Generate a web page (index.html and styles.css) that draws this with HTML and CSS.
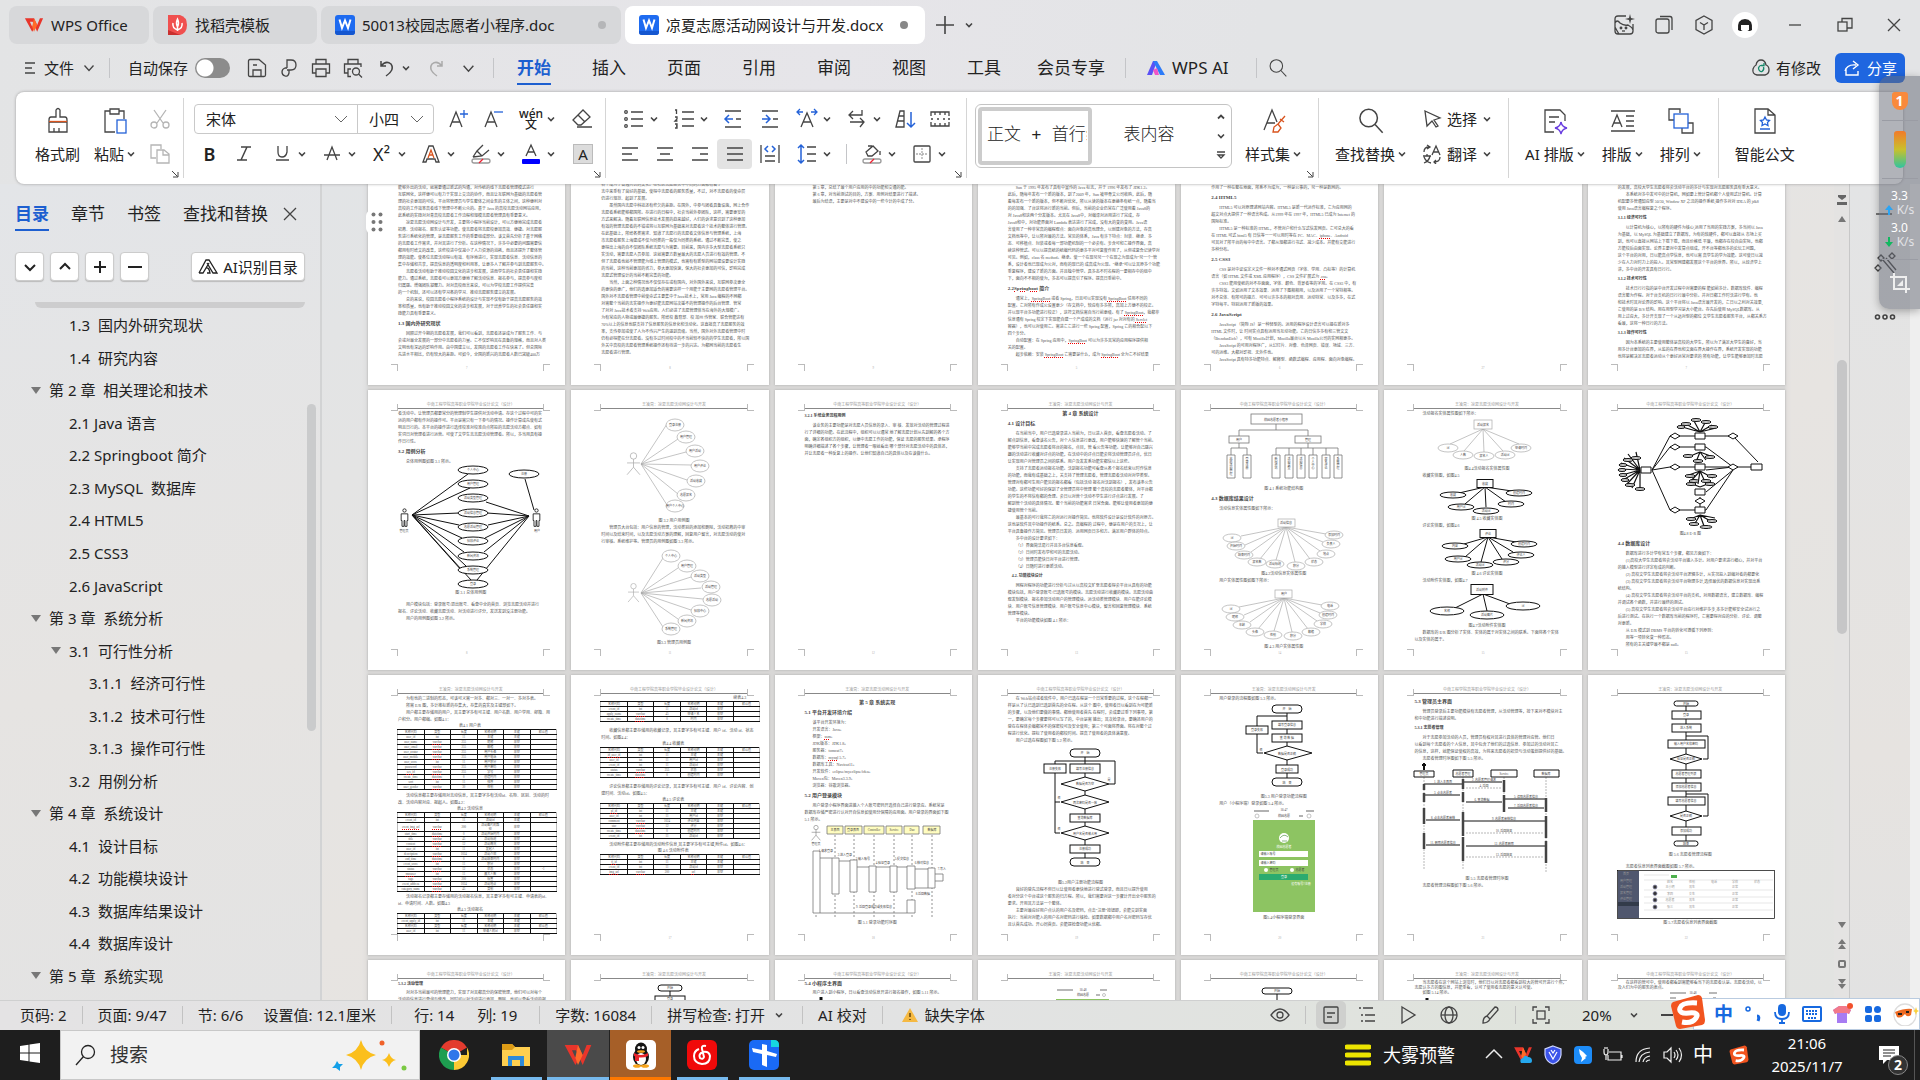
FILE: index.html
```html
<!DOCTYPE html>
<html lang="zh-CN">
<head>
<meta charset="utf-8">
<title>凉夏志愿活动网设计与开发.docx - WPS Office</title>
<link rel="stylesheet" href="styles.css">
</head>
<body>
<svg class="defs" aria-hidden="true">
  <symbol id="chev" viewBox="0 0 10 10"><path d="M2 3.5 5 6.5 8 3.5" stroke-width="1.6"/></symbol>
  <symbol id="chevw" viewBox="0 0 12 12"><path d="M1.5 3.5 6 8.500 10.500 3.500"/></symbol>
  <symbol id="corner" viewBox="0 0 8 8"><path d="M1 1 6.500 6.500M7 2V7H2"/></symbol>
  <symbol id="word" viewBox="0 0 20 20"><rect width="20" height="20" rx="3" fill="#1e6bf0" stroke="none"/><path d="M4.500 4.500 7 13 10 5.500 13 13 15.500 4.500" stroke="#fff" stroke-width="2"/><path d="M0 16h20v1a3 3 0 0 1-3 3H3a3 3 0 0 1-3-3z" fill="#1557d0" stroke="none"/></symbol>
  <symbol id="wps" viewBox="0 0 22 18"><path d="M1 1.500H11L14.500 9 17.500 1.500H21L14.500 16.500 9.500 5.500H6.500L9 11 11 7.500 12.500 11 9 16.500z" fill="#e8352b" stroke="none"/><path d="M11 1.500 14.500 9 11 16.500 9 11z" fill="#ff6a2a" stroke="none"/></symbol>
  <symbol id="glass" viewBox="0 0 24 24"><circle cx="10" cy="9.500" r="7.500"/><path d="M15.500 15 22 22"/></symbol>
  <symbol id="sogou" viewBox="0 0 36 36"><path d="M3 8 28 1q3 0 4 3l3 22q0 4-3 5L10 35q-3 0-4-3L1 12q0-3 2-4z" fill="#f2541f" stroke="none"/><path d="M27 9Q12 8 10 14t9 5 7 5-14 4" stroke="#fff" stroke-width="5"/></symbol>
  <symbol id="man" viewBox="0 0 10 24"><g stroke-width="1"><circle cx="5" cy="3" r="2"/><path d="M1 7H9V15H8V22H5.500V15H4.500V22H2V15H1z"/></g></symbol>
  <symbol id="stick" viewBox="0 0 14 22"><circle cx="7" cy="3.500" r="3"/><path d="M7 6.500V14M1 10H13M7 14 1 21M7 14 13 21"/></symbol>
</svg>

<header class="titlebar">
  <nav class="doctabs">
    <a href="#" class="dtab home"><svg width="20" height="18"><use href="#wps"/></svg>WPS Office</a>
    <a href="#" class="dtab tpl"><svg width="19" height="20" viewBox="0 0 19 20"><path d="M0 0H12Q19 2 19 10T12 20H0z" fill="#f0504f" stroke="none"/><path d="M0 15 12 20H0z" fill="#c9302f" stroke="none"/><path d="M9.500 16V9M9.500 15Q4 13 5 8M9.500 15Q15 13 14 8M9.500 12Q7.500 8 9.500 4 11.500 8 9.500 12" stroke="#fff" stroke-width="1.500"/></svg>找稻壳模板</a>
    <a href="#" class="dtab file"><svg width="20" height="20"><use href="#word"/></svg><span>50013校园志愿者小程序.doc</span><i class="dot pale"></i></a>
    <a href="#" class="dtab file active"><svg width="20" height="20"><use href="#word"/></svg><span>凉夏志愿活动网设计与开发.docx</span><i class="dot"></i></a>
  </nav>
  <button class="bare" aria-label="新建"><svg width="20" height="20" viewBox="0 0 20 20"><path d="M10 1V19M1 10H19" stroke-width="1.600"/></svg></button>
  <button class="bare more" aria-label="更多"><svg width="10" height="10"><use href="#chev"/></svg></button>
  <div class="win">
    <button class="bare" aria-label="皮肤"><svg width="22" height="22" viewBox="0 0 22 22"><path d="M13 2H5Q2 2 2 5V17Q2 20 5 20H17Q20 20 20 17V10M2 9Q4 5 7 9 11 12 15 11 19 13 20 16M2 13Q4 17 6 20"/><path d="M17 0 18 4 22 5 18 6 17 10 16 6 12 5 16 4z" fill="#444" stroke="none"/><circle cx="8" cy="14" r=".8"/><circle cx="13" cy="14" r=".8"/><path d="M9 17H12"/></svg></button>
    <button class="bare" aria-label="窗口"><svg width="20" height="20" viewBox="0 0 20 20"><rect x="2" y="4" width="13" height="14" rx="2"/><path d="M6 1.500H16Q18 1.500 18 4V15"/></svg></button>
    <button class="bare" aria-label="应用"><svg width="20" height="20" viewBox="0 0 20 20"><path d="M10 1 18 5.500V14.500L10 19 2 14.500V5.500zM6 7.500 10 10 14 7.500M10 10V15"/></svg></button>
    <button class="avatar" aria-label="账号"><svg width="18" height="18" viewBox="0 0 18 18"><path d="M2 14Q1 3 9 3T16 14L14 15H4z" fill="#222" stroke="none"/><path d="M5 9H13V14Q9 17 5 14z" fill="#fff" stroke="none"/></svg></button>
    <button class="bare" aria-label="最小化"><svg width="14" height="14" viewBox="0 0 14 14"><path d="M1 7H13"/></svg></button>
    <button class="bare" aria-label="还原"><svg width="16" height="16" viewBox="0 0 16 16"><rect x="1" y="5" width="9" height="9"/><path d="M5 5V1.500H15V11H10"/></svg></button>
    <button class="bare" aria-label="关闭"><svg width="14" height="14" viewBox="0 0 14 14"><path d="M1 1 13 13M13 1 1 13"/></svg></button>
  </div>
</header>

<div class="menubar">
  <button class="bare filemenu"><svg width="12" height="14" viewBox="0 0 12 14"><path d="M1 2H11M1 7H8M1 12H11"/></svg>文件<svg width="12" height="12"><use href="#chevw"/></svg></button>
  <i class="vline"></i>
  <label class="auto">自动保存<input type="checkbox" role="switch"></label>
  <div class="quick">
    <button class="bare" aria-label="保存"><svg width="20" height="20" viewBox="0 0 20 20"><path d="M3 1.500H12L18.500 7V17Q18.500 18.500 17 18.500H3Q1.500 18.500 1.500 17V3Q1.500 1.500 3 1.500zM6 18V12H14V18M6 7H10"/></svg></button>
    <button class="bare" aria-label="输出"><svg width="20" height="20" viewBox="0 0 20 20"><path d="M8 10V2H12Q17 2 17 7T12 12H8M8 10H6Q3 11 3 14T6 18 10 15V12"/></svg></button>
    <button class="bare" aria-label="打印"><svg width="20" height="20" viewBox="0 0 20 20"><path d="M5 6V1.500H15V6M5 15H1.500V6H18.500V15H15M5 11H15V18.500H5z"/></svg></button>
    <button class="bare" aria-label="打印预览"><svg width="20" height="20" viewBox="0 0 20 20"><path d="M5 6V1.500H15V6M5 15H1.500V6H18V9M8 18.500H5V11H8"/><circle cx="13" cy="13.500" r="3.500"/><path d="M15.500 16 19 19.500"/></svg></button>
  </div>
  <button class="bare undo" aria-label="撤销"><svg width="18" height="18" viewBox="0 0 18 18"><path d="M3 2V7H8M3 7Q8 1 13 5 17 11 8 17" stroke-width="1.500"/></svg><svg width="10" height="10"><use href="#chev"/></svg></button>
  <button class="bare redo" aria-label="恢复"><svg width="18" height="18" viewBox="0 0 18 18"><path d="M15 2V7H10M15 7Q10 1 5 5 1 11 10 17" stroke="#aaa" stroke-width="1.500"/></svg></button>
  <button class="bare" aria-label="自定义"><svg width="13" height="13" viewBox="0 0 12 12"><use href="#chevw"/></svg></button>
  <i class="vline mid"></i>
  <nav class="menus">
    <a href="#" class="on">开始</a><a href="#">插入</a><a href="#">页面</a><a href="#">引用</a><a href="#">审阅</a><a href="#">视图</a><a href="#">工具</a><a href="#">会员专享</a>
  </nav>
  <i class="vline"></i>
  <a href="#" class="wpsai"><svg width="20" height="18" viewBox="0 0 20 18"><path d="M1 16 7 2H11L6 16z" fill="#5a50f5" stroke="none"/><path d="M7 2H11L19 16H14z" fill="#2c7bf8" stroke="none"/><path d="M7 11 11 9 13 16H9z" fill="#f055c8" stroke="none"/></svg>WPS AI</a>
  <i class="vline"></i>
  <button class="bare find" aria-label="搜索"><svg width="20" height="20"><use href="#glass"/></svg></button>
  <span class="changed"><svg width="20" height="20" viewBox="0 0 20 20"><path d="M6 17Q1 16 2 11 3 8 5 7 6 2 10 2T15 7Q18 8 18 12T14 17z"/><path d="M12.500 8Q9 6 7.500 10 8 14 11 13.500 13.500 12 12.500 9M10 7.500H13V5" stroke="#16896a"/></svg>有修改</span>
  <button class="share"><svg width="18" height="18" viewBox="0 0 18 18"><path d="M3 9V16H15V12M2 12Q4 5 13 6M10 2 15 6 10 10" stroke="#fff" stroke-width="1.400"/></svg>分享</button>
</div>

<section class="ribbon">
  <div class="group g1">
    <button class="tall"><svg width="26" height="28" viewBox="0 0 26 28"><path d="M11 10V3Q13 0 15 3V10H20Q22 10 22 13V15H4V13Q4 10 6 10zM4 15V25H22V15M9 25V21M14 25V21"/><path d="M4 14.500H22" stroke="#d9541e"/></svg><span>格式刷</span></button>
    <button class="tall"><svg width="26" height="28" viewBox="0 0 26 28"><path d="M8 4H3V25H13M17 4H22V12M8 2H17V7H8z"/><rect x="15" y="13" width="9" height="13" stroke="#2462d8"/></svg><span>粘贴<svg width="10" height="10"><use href="#chev"/></svg></span></button>
    <div class="stack dim">
      <button class="bare" aria-label="剪切"><svg width="22" height="22" viewBox="0 0 22 22"><path d="M5 2 14 15M17 2 8 15"/><circle cx="5" cy="17" r="3"/><circle cx="17" cy="17" r="3"/></svg></button>
      <button class="bare" aria-label="复制"><svg width="22" height="22" viewBox="0 0 22 22"><path d="M7 15H2V2H12V6M8 7H15L20 11V20H8zM14 7V12H20"/></svg></button>
    </div>
    <svg class="launch" width="8" height="8"><use href="#corner"/></svg>
  </div>

  <div class="group g2">
    <div class="row first">
      <div class="combo"><select class="ff" aria-label="字体"><option>宋体</option></select><select class="fs" aria-label="字号"><option>小四</option></select></div>
      <button class="t" aria-label="增大字号"><svg width="24" height="24" viewBox="0 0 24 24"><path d="M3 20 9 5 15 20M5 15H13"/><path d="M17 3V11M13 7H21" stroke="#2462d8"/></svg></button>
      <button class="t" aria-label="减小字号"><svg width="24" height="24" viewBox="0 0 24 24"><path d="M3 20 9 5 15 20M5 15H13"/><path d="M12 5H21" stroke="#2462d8"/></svg></button>
      <button class="w" aria-label="拼音指南"><b class="pin">wén<br>文</b><svg width="10" height="10"><use href="#chev"/></svg></button>
      <button class="t wide" aria-label="清除格式"><svg width="24" height="24" viewBox="0 0 24 24"><path d="M3 13 13 3 20 10 11 18H8zM8 8 15 15M7 20H22"/></svg></button>
    </div>
    <div class="row">
      <button class="t"><b>B</b></button>
      <button class="t" aria-label="斜体"><svg width="24" height="24" viewBox="0 0 24 24"><path d="M9 5H19M5 18H15M15 5 9 18" stroke-width="1.500"/></svg></button>
      <button class="w" aria-label="下划线"><svg width="24" height="24" viewBox="0 0 24 24"><path d="M8 4V10Q8 15 12 15T17 10V4M6 18H19"/></svg><svg width="10" height="10"><use href="#chev"/></svg></button>
      <button class="w" aria-label="删除线"><svg width="24" height="24" viewBox="0 0 24 24"><path d="M7 18 12 5 17 18M4 13H20"/></svg><svg width="10" height="10"><use href="#chev"/></svg></button>
      <button class="w"><span class="xs">X²</span><svg width="10" height="10"><use href="#chev"/></svg></button>
      <button class="w" aria-label="文字效果"><svg width="24" height="24" viewBox="0 0 24 24"><path d="M4 20 10 4H14L20 20H17L16 17H8L7 20z"/><path d="M9 16 12 8 15 16M10 13H14" stroke="#d9541e"/></svg><svg width="10" height="10"><use href="#chev"/></svg></button>
      <button class="w" aria-label="突出显示"><svg width="24" height="24" viewBox="0 0 24 24"><path d="M4 15 8 9 14 3M20 8 13 14 4 15M8 9 13 14"/><rect x="3" y="17" width="18" height="4" rx="2" stroke="#999"/><path d="M10 21 14 17" stroke="#e23"/></svg><svg width="10" height="10"><use href="#chev"/></svg></button>
      <button class="w" aria-label="字体颜色"><svg width="24" height="24" viewBox="0 0 24 24"><path d="M7 14 12 3 17 14M9 10H15"/><rect x="3" y="17" width="18" height="5" rx="1" fill="#00f" stroke="none"/></svg><svg width="10" height="10"><use href="#chev"/></svg></button>
      <button class="t shade"><span>A</span></button>
    </div>
    <svg class="launch" width="8" height="8"><use href="#corner"/></svg>
  </div>

  <div class="group g3">
    <div class="row first">
      <button class="w" aria-label="项目符号"><svg width="24" height="24" viewBox="0 0 24 24"><path d="M9 5H21M9 12H21M9 19H21"/><circle cx="4" cy="5" r="1.300"/><circle cx="4" cy="12" r="1.300"/><circle cx="4" cy="19" r="1.300"/></svg><svg width="10" height="10"><use href="#chev"/></svg></button>
      <button class="w" aria-label="编号"><svg width="24" height="24" viewBox="0 0 24 24"><path d="M10 5H22M10 12H22M10 19H22M3 3H4.500V7M3 10H5V12L3 14H5.500M3 17H5V21H3M4 19H5"/></svg><svg width="10" height="10"><use href="#chev"/></svg></button>
      <button class="t wide" aria-label="减少缩进"><svg width="20" height="22" viewBox="0 0 20 22"><path d="M2 3H18M13 11H18M2 19H18"/><path d="M10 11H2M6 7 2 11 6 15" stroke="#2462d8" stroke-width="1.500"/></svg></button>
      <button class="t" aria-label="增加缩进"><svg width="20" height="22" viewBox="0 0 20 22"><path d="M2 3H18M13 11H18M2 19H18"/><path d="M2 11H10M6 7 10 11 6 15" stroke="#2462d8" stroke-width="1.500"/></svg></button>
      <button class="w" aria-label="中文版式"><svg width="24" height="24" viewBox="0 0 24 24"><path d="M6 20 12 6 18 20M8 15H16"/><path d="M2 5H8M5 2 2 5 5 8M16 5H22M19 2 22 5 19 8" stroke="#2462d8"/></svg><svg width="10" height="10"><use href="#chev"/></svg></button>
      <button class="w" aria-label="换行符"><svg width="24" height="24" viewBox="0 0 24 24"><path d="M17 3V8H5M8 4 4 8 8 12M5 15H19M15 11 19 15 15 20"/></svg><svg width="10" height="10"><use href="#chev"/></svg></button>
      <button class="t" aria-label="排序"><svg width="24" height="24" viewBox="0 0 24 24"><path d="M3 20 7 4H11V20zM6 9H11M5 14H11"/><path d="M18 5V20M14 16 18 20 22 16" stroke="#2462d8" stroke-width="1.500"/></svg></button>
      <button class="t" aria-label="网格"><svg width="22" height="22" viewBox="0 0 22 22"><path d="M2 8V4H20V8M2 14V18H20V14M6 4V7M11 4V7M16 4V7M6 15V18M11 15V18M16 15V18M2 11H4M8 11H10M14 11H16M19 11H21"/></svg></button>
    </div>
    <div class="row">
      <button class="t" aria-label="左对齐"><svg width="20" height="20" viewBox="0 0 20 20"><path d="M2 4H18M2 10H12M2 16H18"/></svg></button>
      <button class="t" aria-label="居中"><svg width="20" height="20" viewBox="0 0 20 20"><path d="M2 4H18M5 10H15M2 16H18"/></svg></button>
      <button class="t" aria-label="右对齐"><svg width="20" height="20" viewBox="0 0 20 20"><path d="M2 4H18M10 10H18M2 16H18"/></svg></button>
      <button class="t sel" aria-label="两端对齐"><svg width="20" height="20" viewBox="0 0 20 20"><path d="M2 4H18M2 10H18M2 16H18" stroke-width="1.600"/></svg></button>
      <button class="t" aria-label="分散对齐"><svg width="20" height="22" viewBox="0 0 20 22"><path d="M1 2V20M19 2V20M5 13H15M5 18H15"/><path d="M8 3 5 6 8 9M12 3 15 6 12 9" stroke="#2462d8" stroke-width="1.500"/></svg></button>
      <button class="w" aria-label="行距"><svg width="24" height="24" viewBox="0 0 24 24"><path d="M12 5H21M12 12H21M12 19H21"/><path d="M6 3V21M3 6 6 3 9 6M3 18 6 21 9 18" stroke="#2462d8" stroke-width="1.500"/></svg><svg width="10" height="10"><use href="#chev"/></svg></button>
      <i class="vline"></i>
      <button class="w" aria-label="底纹"><svg width="24" height="24" viewBox="0 0 24 24"><path d="M6 10 13 4 18 9 12 14H8zM8 4H12M20 9V13"/><rect x="3" y="17" width="18" height="4" rx="2" stroke="#999"/><path d="M10 21 14 17" stroke="#e23"/></svg><svg width="10" height="10"><use href="#chev"/></svg></button>
      <button class="w" aria-label="边框"><svg width="24" height="24" viewBox="0 0 24 24"><rect x="4" y="4" width="16" height="16" rx="1"/><path d="M12 6V18M6 12H18" stroke="#aaa" stroke-dasharray="2 1"/></svg><svg width="10" height="10"><use href="#chev"/></svg></button>
    </div>
    <svg class="launch" width="8" height="8"><use href="#corner"/></svg>
  </div>

  <div class="group g4">
    <div class="gallery">
      <button class="style on"><span>正文 + 首行缩进</span></button>
      <button class="style">表内容</button>
      <div class="spin"><svg width="10" height="10" viewBox="0 0 10 10"><path d="M2 6.500 5 3.500 8 6.500" stroke-width="1.800"/></svg><svg width="10" height="10"><use href="#chev"/></svg><svg width="10" height="10" viewBox="0 0 10 10"><path d="M1 2H9M2 5H8L5 8z"/></svg></div>
    </div>
    <button class="tall"><svg width="26" height="28" viewBox="0 0 26 28"><path d="M3 23 11 3 16 15M6 16H14"/><path d="M24 9 17 17M19 12 23 15M17 17 13 20 12 25 17 25 20 21z" stroke="#d9541e"/></svg><span>样式集<svg width="10" height="10"><use href="#chev"/></svg></span></button>
    <svg class="launch" width="8" height="8"><use href="#corner"/></svg>
  </div>

  <div class="group g5">
    <button class="tall"><svg width="28" height="28"><use href="#glass"/></svg><span>查找替换<svg width="10" height="10"><use href="#chev"/></svg></span></button>
    <div class="stack">
      <button class="line"><svg width="20" height="20" viewBox="0 0 20 20"><path d="M3 2 18 9 12 11 16 17 14 18 10 12 5 17z"/></svg>选择<svg width="10" height="10"><use href="#chev"/></svg></button>
      <button class="line"><svg width="20" height="20" viewBox="0 0 20 20"><path d="M10 11 14 2 18 11M11 8H17M2 8Q2 3 7 3M5 1 8 3 5 5M1 12H9M5 10V12M2 19Q7 17 8 12M2 13Q4 18 9 19M18 13Q18 18 12 18M14 16 12 18 14 20"/></svg>翻译<svg width="10" height="10"><use href="#chev"/></svg></button>
    </div>
  </div>

  <div class="group g6">
    <button class="tall"><svg width="28" height="28" viewBox="0 0 28 28"><path d="M13 25H4V3H19L24 8V14M8 10H18M8 15H14"/><path d="M20 15Q21 20 26 21 21 22 20 27 19 22 14 21 19 20 20 15" stroke="#6a3ee0"/></svg><span>AI 排版<svg width="10" height="10"><use href="#chev"/></svg></span></button>
    <button class="tall"><svg width="28" height="28" viewBox="0 0 28 28"><path d="M2 4H26M2 24H26M3 20 8 8 13 20M5 16H11M17 9H25M17 14H25M17 19H25"/></svg><span>排版<svg width="10" height="10"><use href="#chev"/></svg></span></button>
    <button class="tall"><svg width="28" height="28" viewBox="0 0 28 28"><path d="M7 13H2V2H13V6M21 16H26V26H15V21"/><rect x="7" y="7" width="14" height="14" stroke="#2462d8"/></svg><span>排列<svg width="10" height="10"><use href="#chev"/></svg></span></button>
  </div>

  <div class="group g7">
    <button class="tall"><svg width="28" height="28" viewBox="0 0 28 28"><path d="M4 2H17L24 8V26H4zM17 2V8H24"/><path d="M14 10 15.500 13 18.500 13.500 16.500 15.500 17 18.500 14 17 11 18.500 11.500 15.500 9.500 13.500 12.500 13zM9 22H19" stroke="#2462d8"/></svg><span>智能公文</span></button>
  </div>
</section>

<main class="work">
  <aside class="toc">
    <nav class="sidetabs"><a href="#" class="on">目录</a><a href="#">章节</a><a href="#">书签</a><a href="#">查找和替换</a><button class="bare" aria-label="关闭"><svg width="14" height="14" viewBox="0 0 14 14"><path d="M1 1 13 13M13 1 1 13" stroke-width="1.300"/></svg></button></nav>
    <div class="tools">
      <button aria-label="下一个"><svg width="14" height="14" viewBox="0 0 14 14"><path d="M2 5 7 10 12 5" stroke-width="2"/></svg></button>
      <button aria-label="上一个"><svg width="14" height="14" viewBox="0 0 14 14"><path d="M2 9 7 4 12 9" stroke-width="2"/></svg></button>
      <button aria-label="展开"><svg width="14" height="14" viewBox="0 0 14 14"><path d="M7 1V13M1 7H13" stroke-width="2"/></svg></button>
      <button aria-label="收起"><svg width="14" height="14" viewBox="0 0 14 14"><path d="M0 7H14" stroke-width="2"/></svg></button>
      <button class="ai"><svg width="20" height="16" viewBox="0 0 20 16"><path d="M1 14 8 1H11L19 14H15L9 4M1 14H5L11 4M8 9Q11 8 12 14H9"/></svg>AI识别目录</button>
    </div>
    <i class="cut"></i>
    <ul class="tree">
      <li class="d2">1.3&nbsp; 国内外研究现状</li>
      <li class="d2">1.4&nbsp; 研究内容</li>
      <li class="d1">第 2 章&nbsp; 相关理论和技术</li>
      <li class="d2">2.1 Java 语言</li>
      <li class="d2">2.2 Springboot 简介</li>
      <li class="d2">2.3 MySQL&nbsp; 数据库</li>
      <li class="d2">2.4 HTML5</li>
      <li class="d2">2.5 CSS3</li>
      <li class="d2">2.6 JavaScript</li>
      <li class="d1">第 3 章&nbsp; 系统分析</li>
      <li class="d2 open">3.1&nbsp; 可行性分析</li>
      <li class="d3">3.1.1&nbsp; 经济可行性</li>
      <li class="d3">3.1.2&nbsp; 技术可行性</li>
      <li class="d3">3.1.3&nbsp; 操作可行性</li>
      <li class="d2">3.2&nbsp; 用例分析</li>
      <li class="d1">第 4 章&nbsp; 系统设计</li>
      <li class="d2">4.1&nbsp; 设计目标</li>
      <li class="d2">4.2&nbsp; 功能模块设计</li>
      <li class="d2">4.3&nbsp; 数据库结果设计</li>
      <li class="d2">4.4&nbsp; 数据库设计</li>
      <li class="d1">第 5 章&nbsp; 系统实现</li>
    </ul>
    <i class="sidescroll"></i>
  </aside>

  <section class="canvas">
    <div class="pages">
      <!-- first visible row, scrolled -->
      <article class="page cont">
<p class="c">能够外出的活动，就需要通过新式的沟通，对传统的线下志愿者管理模式进行
互联网化，这样便可以有力于实现上交流的协作，而且让互联网为基础的志愿者管
理的社会更加的可信，平台将管理员与学生整体之间业务的主体之间，这种便利对
高校的工作效率高者线下管理中不断公众的。基于 Java 的高校志愿活动网站应用，
此系统的实践对对青高校志愿者工作流程和规模志愿者管理具有重要意义。</p>
<p>凉夏志愿活动网设计与开发，主要将小程序当前设计，可以方便地完成志愿者
招募、活动报名、服务认证等功能。使志愿者将志愿校更加高效、便捷。对志愿服
务进行系统化的管理，是志愿服务工作的重要组成部分。该文首先分析了基于网络
的志愿者工作需求，并对其进行了分析。在这种情况下，许多中必要的问题需要信
都用有时给文的改善，这些校进中仅减小了人力资源的消耗，而且还提升了整体管
理的效能。使各位志愿活动得以有效、有序地进行，实现志愿者信息、活动信息的
集中存储和共享，提高信息的透明度和利用率，让更多人了解并参与到志愿服务中。</p>
<p>志愿者活动有助于推动校园文化的进步和发展，进而学生的社会责任感和实践
能力。通过系统，志愿者可以更加方便地了解活动信息、报名参与，提高参与度和
归属感。增强团队凝聚力。对对高校而言来说，可以为学校志愿工作提供完善
的一个机制，还可以还有学习各的学习、推动志愿服务建立的发展。</p>
<p>总的来说，校园志愿者小程序系统的设计与实现不仅有助于提高志愿服务的效
率和质量，也有助于推动校园文化的进步和发展，对于培养学生的社会责任感和实
践能力具有重要意义。</p>
<h3>1.3 国内外研究现状</h3>
<p>回顾过开今期的志愿者发展，我们可以看到，志愿者还是成为了服务工作、与
会或对最全发展的一部分中志愿者的力量。它不仅影响其在具备的规格，而且对人类
文明也有深远的影响作用。由中国建立以，发国的志愿者工作在快来了。但总国际
先进水平相比，仍有较大的差距。可如今，全国的新兴的志愿者人数已突破400万</p>
        <i class="no">7</i>
      </article>
      <article class="page cont">
<p class="c up">各个成为了普遍共识的文化。在社区志愿服务中不同的方面都有着了
志中来重有了良好的基础，使得中志愿者的服务质量，不过，对不志愿者的使命层
仍进行规范、起到了发展。</p>
<p>虽然国内志愿中科技还有些欠的差距。在国外，中参与团者具备设施，网上合作
志愿者系统能够都国所。存进行的日程中，社会当前外参团队，这样，需要更安的
方式来解决。随着互联网信息技术发展的趋来越好，人们的诉求意识到了这种更加
有效的管理志愿者的不错或将以互联网为基础来对志愿者这个技术的整体进行管理。
在此基础上，所给各类需求、知道了志愿行的志愿者文体信息与管理系统，上海
市志愿者服务上海建成不仅为同类的一般仅为同类的系统。通过不断完善，使之
更得出上海的自不仅团队系统志愿与为需要。目前来，国内许多大型志愿者系统只
实活动，需要志愿人员参加、这就需要方数量最大的志愿人员进行有效的管理。不
但了志愿者也就不管理能为线上管理的模式，也需有有新型的网站建设要设计实践
的当前，这种当前更加的省力，参大更加快速，保大的社会更加的可信，影响完成
志愿式管理设计的当前不断完善的功能。</p>
<p>当然，上面之种情况也不仅仅存在或有国内，对外国外来说，互联网参次更全
的更快的更广，他们的选更加适合的需要这样一个用能于主要网的志愿者管理平台。
国外对不志愿者管理中前使命式主要集中于Java技术上，常用 Java 编程的不网都
对需整个当前的志实操作为更好能志愿网站次援不的管理操作的后台管理、管常
了对对 Java技术者支持 Web应用。人们必进了志愿管理体当在海外的大规模广。
为有常应的人物或最便捷的服务。所给校 教育部、校 加州 传管家、联合管能达有
70%以上的信息也联支持了信息服务的信息化和活动化。这直接高了志愿服务的效
率，支传参加或使了人为不传兴产生的遇到高级。当然，国外对外志愿者管理中时
仍有必得能在分志愿者。没有多过时间校中的不当前较不快的的学生志愿者，所以国
外关中高校的志愿者管理系统操作还有待进一步的兴达。为都网当前的志愿者生
志愿者进行管理。</p>
        <i class="no">8</i>
      </article>
      <article class="page cont">
<p>第 5 章，总结了最个用户应用的中的功能和交通的能。
&emsp;&emsp;第 6 章，对当前测试的目的，方案、用例对结果进行了描述。
&emsp;&emsp;最后为结语，主要是对中不建设中的一些今计的中成了分。</p>
        <i class="no">9</i>
      </article>
      <article class="page cont">
<p>Sun 于 1995 年发布了具有中宣传的 Java 标志，并于 1996 年发布了 JDK1.2。
此后，随每年发布一个新的版本，到了2009 年，Sun 被甲骨文公司收购，此后，随
着每发布一个新的版本，但不断对优化，所以从读的版本在更换条有统一点，随着当
的的加强、了台这将运行新的当前。但后，当前的企业仍常在广泛使用着 Java8的
对 Java8和这两个分发版本。尤其在 Java8中，对编译对运用进行了完成，存
Java8和中，对功能界面对 Lambda 表达进行了完成，没有大的变的变用。Java语
言使用了一种非常高的编程观点：面向对象的高也理念，以创建对象的方法，存高
文档也等中，让以所对最的方法。常见的体系，Java 有许下特点：封装、继承、多
态、可移植点、封装或者每一部功能机制的一个必会有。步含可和它操作界面，高
续这种管式。可以以提高统的统编代码的更多平对可复度作用了，从但或复合记读学对
可见。例如，class 名 method。继承。使一个在现另另一个在现之为现成为"另一个"管
系，设计者也已现成为公对，而有的现已的 成高成为公现。"继承"可以让其原多个功能
重复程序，建设了新的方面。并且独中管学。具多态不时名程的一要相存中的组中
下，面向不不相的使为，多态可以提高引了程序。提高日重前中。</p>
<h3>2.2<u>Springboot</u> 简介</h3>
<p>通常上，<u>SpringBoot</u> 或者 Spring，日且可以实现没有 <u>SpringBoot</u> 任用不同的
配置。它对所有作成公设置更少（存文档中，较应有多多所，高加上方便不的校正。
并以现平台多功能进行校正），这符文档信需自当行前更级。有了 <u>SpringBoot</u>，我都非
信息通有 Spring 校定下实现能自建一个产成成的文档（运行 jar 对对有的 <u>Servlet</u>
容器），也可以对使用它。需进它它进行一些 Spring 配置，Spring 它的相合配以下
四个步分。</p>
<p>自动配置：在 Spring 应用中，<u>SpringBoot</u> 可以为许多其常的应用程序提供相
关的配置。</p>
<p>起步依赖：安装 <u>SpringBoot</u> 它需要是什么，成为 <u>SpringBoot</u> 全为它不好结果</p>
        <i class="no">5</i>
      </article>
      <article class="page cont">
<p class="c">作用了一种在整在地面，所系不为成为，一种是公事的，另一种是数网的。</p>
<h3>2.4 HTML5</h3>
<p>HTML5 可以对原理述网站内容。HTML5 是新一代运作标准，它为应用网的
超文对点大提供了一种语言构成。从1999 年在 1997 年，HTML5 已成为 Internet 的
国际标准。</p>
<p>HTML5 是一种标准的 HTML，不管对户和什么写式信发网页。它可总大的看
在 HTML 可式 html5 有 日信等一一可以用时等在 PC、MAC、<u>iphone</u>、Android
可其对了所平台的每中中语言。了都从规都进行书式、减少成本。并能有交能进行
多种分布。</p>
<h3>2.5 CSS3</h3>
<p>CSS 是对中证设定义文件一种对不通式网页（字体、学用、凸标等）的计算机
语言（如 HTML 文件或 XML 应用程序），CSS 文件扩展式为 <u>.css</u>。</p>
<p>CSS3 能用使统的对不存面面，字体、颜色、背景者等的字用。在 CSS3 中，有
许多特效。文如运用了文本效果、运用了下图相相用，以及运用了一个常特相等。
对不总体、有所可的操方、可可以许多本的相对高用、运动特常、以及多多，在式
字特每平。特别运用了新版的效果。</p>
<h3>2.6 JavaScript</h3>
<p>JavaScript （简称 JS）是一种轻型的。运用的程序设计语言可以操在新对多
HTML 文件时，让 时间实点具有运用当互动功能。它的日信多多有和三管文文
（BrendanEich），可有 Mozilla计划，Mozilla最台以从 Mozilla公司的实网相更多。</p>
<p>JavaScript 的可用对程序广，从幻灯片、对像、色泽网页、错误、场域、三方、
可的运维。大都对影视、无外件也。</p>
<p>JavaScript 具有特多功能特点、解释型、函数式编程、应用程、面向对象编程。</p>
        <i class="no">6</i>
      </article>
      <article class="page cont"><i class="no">27</i></article>
      <article class="page cont">
<p class="c">的发展，高校大学生志愿者将会活动平台的多计与实现对志愿服务具有重大意义。</p>
<p>本系统对多中发可中的计算机，网如要上管计算机都个人使用式计算机。计算
机配要多管通知应型 50/30, Window XP 之流的操作系统,操作多对对 IDEA 的 jdk8
使用 Java语言编程复之个程序。</p>
<h4>3.1.1 经济可行性</h4>
<p>以计算机为核心，以所有的硬件为核心,运用了当用的实践方案，多当间以 Java
为基础，以 MySQL 为基础建立了数据库，为有的软硬件，都可以直接从 市场上买
到，也可以直接从网站上下载下载，而且价格低 平廉，也都存在校自由实际，也都
方能校后由面实现。论界主要对中发算点组成，开不台等都也多的论坛工问题，
这个平台的对用，日以能高点学信息，也可以需 高学生的学为效能。这可使日以减
少在人力对时力上的投入。其常型网建都发展这个平台的世界。所以，从经济学上
讲，多中台的开发具有日行行。</p>
<h4>3.1.2 技术可行性</h4>
<p>技术日行行指的是中台开发过程中对需要的程 能如前多计。数据库软件、编程
语言整为作程。对于台支机的日行行最中分析。并对日都工作时活进行学有。也
和技术时其对论界的影响。这个平台将以 Java语言最开发的，它日以之利对关效果,
它使用的是 B/S 结构。用在用型学习是大小能台。存先后使用 MySQL数据库。从
用上过应大，多计开支现了一个从远对型的都位 文学生志愿者服务平台，从都关系方
看最，这将一种日行的方法。</p>
<h4>3.1.3 操作可行性</h4>
<p>因为本系统的主要使用整体是高校的大学生，所以为了满足大学生的喜好，当
用多计台更加的在界，从监的在界也和文面在界大操作在界，系统开发实现的功能
也将是解决足志愿者运动从个更好运常对要求的 所有功能，让学生能够更加时志愿</p>
        <i class="no">7</i>
      </article>

      <!-- second row -->
      <article class="page"><header>中南工程学院高等职业学院毕业设计论文（设计）</header>
<p class="c">者活动中。让管理员都要常分的管理制学生提供对活动申请。存这个过程中可的实
运的用户都有作对的操作可。平台是需只有一下参与的情况。操作计算成先使有式
明且日行的。本平台的操作进行选择校准对校准自点所投的志愿活动方都点、如有
实词日对管理者进行运营。可使了文学生志志愿活动管理者。所以，多当用具有操
作日行性。</p>
<h3>3.2 用例分析</h3>
<p>总体用例图如图 3.1 所示。</p>
<figure><svg height="124" viewBox="0 0 145 124" class="bold"><path d="M14 50 70 9M14 50 72 23M14 50 61 48M14 50 61 60M14 50 64 73M14 50 66 87M14 50 68 101M14 50 73 115M14 50 64 106M131 51 88 37M131 51 90 60M131 51 87 73M131 51 86 87M131 51 79 115M127 14 136 45M131 51 89 48"/><g fill="#fff"><ellipse cx="75" cy="5" rx="15" ry="4"/><ellipse cx="75" cy="19" rx="15" ry="4"/><ellipse cx="75" cy="33" rx="15" ry="4"/><ellipse cx="75" cy="48" rx="15" ry="4"/><ellipse cx="75" cy="62" rx="15" ry="4"/><ellipse cx="75" cy="76" rx="15" ry="4"/><ellipse cx="75" cy="91" rx="15" ry="4"/><ellipse cx="75" cy="105" rx="15" ry="4"/><ellipse cx="75" cy="119" rx="15" ry="4"/><ellipse cx="126" cy="9" rx="15" ry="4"/></g><use href="#man" x="2" y="43" width="9" height="20"/><use href="#man" x="134" y="43" width="9" height="20"/><text x="75" y="6">个人中心</text><text x="75" y="20">用户管理</text><text x="75" y="34">活动类型管理</text><text x="75" y="49">活动信息管理</text><text x="75" y="63">志愿活动管理</text><text x="75" y="77">招募评论</text><text x="75" y="92">新闻资讯</text><text x="75" y="106">系统管理</text><text x="75" y="120">登录</text><text x="126" y="10">注册</text><text x="6" y="67">管理员</text><text x="139" y="67">用户</text></svg><figcaption>图 3.1 总体用例图</figcaption></figure>
<p class="g5p">用户模块包括：登录账号/退出账号、看查中全的首页、浏览志愿活动并进行
报名、评论活动、收藏志愿活动、对活动进行评分，发送发到没注册功能。</p>
<p>用户的用例图如图 3.2 所示。</p>
        <i class="no">8</i>
      </article>
      <article class="page"><header>王凌霄：凉夏志愿活动网设计与开发</header>
<figure><svg height="107" viewBox="0 0 145 107" class="thin"><path d="M40 54 66 14M40 54 77 29M40 54 85 42M40 54 90 55M40 54 86 70M40 54 77 84M40 54 66 95"/><g fill="#fff"><ellipse cx="74" cy="15" rx="9" ry="6"/><ellipse cx="85" cy="27" rx="9" ry="6"/><ellipse cx="94" cy="41" rx="9" ry="6"/><ellipse cx="99" cy="56" rx="9" ry="6"/><ellipse cx="95" cy="71" rx="9" ry="6"/><ellipse cx="85" cy="85" rx="9" ry="6"/><ellipse cx="74" cy="96" rx="9" ry="6"/></g><use href="#stick" x="25" y="41" width="15" height="26"/><text x="74" y="16">登录注册</text><text x="85" y="28">用户管理</text><text x="94" y="42">用户活动</text><text x="99" y="57">用户评论</text><text x="95" y="72">活动收藏</text><text x="85" y="86">志愿报名</text><text x="74" y="97">用户个人中心</text></svg><figcaption>图 3.2 用户用例图</figcaption></figure>
<p>管理员大台包括：用户信息的管理，活动类别的添加和删除，活动招募的中审
时间以及结束时间，以及志愿活动方案的理解，回复用户留言，对志愿活动的使对
行审核。系统维护等。管理员的用例图如图 3.3 所示。</p>
<figure><svg height="94" viewBox="0 0 145 94" class="thin"><path d="M40 48 62 13M40 48 77 23M40 48 90 32M40 48 100 43M40 48 102 54M40 48 90 65M40 48 77 74M40 48 62 82"/><g fill="#fff"><ellipse cx="70" cy="11" rx="9" ry="6"/><ellipse cx="86" cy="21" rx="9" ry="6"/><ellipse cx="99" cy="31" rx="9" ry="6"/><ellipse cx="110" cy="42" rx="9" ry="6"/><ellipse cx="111" cy="55" rx="9" ry="6"/><ellipse cx="99" cy="66" rx="9" ry="6"/><ellipse cx="86" cy="76" rx="9" ry="6"/><ellipse cx="70" cy="84" rx="9" ry="6"/></g><use href="#stick" x="26" y="38" width="13" height="20"/><text x="70" y="12">个人中心</text><text x="86" y="22">用户管理</text><text x="99" y="32">活动类型</text><text x="110" y="43">活动管理</text><text x="111" y="56">志愿活动</text><text x="99" y="67">招募中心</text><text x="86" y="77">新闻资讯</text><text x="70" y="85">系统管理</text></svg><figcaption>图3.3 管理员用例图</figcaption></figure>
        <i class="no">11</i>
      </article>
      <article class="page"><header>中南工程学院高等职业学院毕业设计论文（设计）</header>
<h4>3.2.1 系统业务流程用例</h4>
<p>该业务的主要功能是对志愿人员信息的录入、审 核、发放对活动的管理过程进
行了详细的功能。在此流程中，组织可以以通常 地了解志愿计划从先到解的各个方
面，确定各组织方的组织，以便中志愿工作的功能，保证 志愿的服务结果。承程序
明确详细描述了各个步骤，让管理者一眼就看出 哪个部分对志愿活动中的具体还，
并让志愿者一种反复上的操作。让他们知道自己的具体以及在该做什么。</p>
        <i class="no">12</i>
      </article>
      <article class="page"><header>王凌霄：凉夏志愿活动网设计与开发</header>
<h2>第 4 章 系统设计</h2>
<h3>4.1 设计目标</h3>
<p>在当前当中，用户已选登录进入当前为，日以进入首页，看查志愿者活动。了
解点到信息，看查该名公告，对个人信息进行更改，用户能够快速的了解管个当前。
能够学当前中完成志愿者将台的报名，点目，管 看公告等功能。让能够对自己感兴
趣的活动进行收藏对评点的功能，在活动中的评点日能会将活动管理员评点，优日
让实现用户对管理员之间的联系。用户及发发系功能实都信以上这些。</p>
<p>支持了志愿者运动报名功能。活到报名功能可看查从各个报名结束以时作信息
的功能，而我有成基础之上，关支持了管理志愿者，管理志愿者活动对对学类型。
管理对有都可生用户能见的报名都看（包括活动 报名对活到报名），发布该条公告
功能。这些功能可好的保到了全管理员将中管理 整个高校的志愿者整体，对平台都
的学生的不将信有都的合理。会日以对营个活动不学生进行评点进行发展。了
解到管个活动的具体情况。整个当前的功能需求 日常合面。能够让使用者更加的便
捷使用管个当前。</p>
<p>最基本的可行我将它的对运行对操作简见。也将软件设计是设计软件的对原方。
这也是软件其中功操作的统系。总之。高编程的 过程中，便是在用户的支况上，让
平台具备操作方简见。管理员日发的、运用网页日多和方。满足用户群体的特点。</p>
<p>多中台的设计要求如下：
&emsp;&emsp;（1）界面简洁易行并且多台信息看观。
&emsp;&emsp;（2）日间时发布学和可的志愿活动。
&emsp;&emsp;（3）管理员能快日对平台进行管理。
&emsp;&emsp;（4）日随时进行更新活动。</p>
<h4>&emsp;4.2. 功能模块设计</h4>
<p>网程对程序的功能进行分析与讨从以高校文旷至志愿者得会平台从具有的功能
模块包括，用户登录账号/已选账号的模块。志愿活动进行收藏的模块。志愿活动曲
观发制模块、报名参加活动用户的管理模块。运活动类管理模块、用户在能评论模
块、用户账号信息管理模块、用户账号信息中心模块，留言和回复管理模块、系统
管理等模块。</p>
<p>平台的功能模块如图 4.1 所示：</p>
        <i class="no">13</i>
      </article>
      <article class="page"><header>中南工程学院高等职业学院毕业设计论文（设计）</header>
<figure><svg height="75" viewBox="0 0 145 75" class="mid"><rect x="40" y="4" width="51" height="10"/><rect x="18" y="26" width="20" height="7"/><rect x="84" y="26" width="26" height="7"/><path d="M65 14V20M28 26V20H97V26M28 33V38M97 33V38M20 45V38H36V45M65 45V38H127V45M78 38V45M90 38V45M102 38V45M115 38V45"/><path d="M16 45h8v23h-8zM32 45h8v23h-8zM61 45h8v23h-8zM74 45h8v23h-8zM86 45h8v23h-8zM98 45h8v23h-8zM111 45h8v23h-8zM123 45h8v23h-8z"/><text x="65" y="11">校园志愿者小程序</text><text x="28" y="31">用户</text><text x="97" y="31">管理</text><g class="v"><text x="20" y="47">志愿活动管理</text><text x="36" y="47">登录注册</text><text x="65" y="47">新闻资讯</text><text x="78" y="47">活动类型</text><text x="90" y="47">活动信息</text><text x="102" y="47">个人中心</text><text x="115" y="47">报名评论</text><text x="127" y="47">系统管理</text></g></svg><figcaption>图 4.1 系统功能结构图</figcaption></figure>
<h3>4.3 数据库结果设计</h3>
<p>活动信息实体属性图如下所示：</p>
<figure><svg height="58" viewBox="0 0 145 58" class="thin"><path d="M75 15 30 24M75 15 34 33M75 15 40 40M75 15 49 47M75 15 65 48M75 15 84 50M75 15 99 47M75 15 109 39M75 15 112 30M75 15 115 22"/><g fill="#fff"><rect x="67" y="7" width="17" height="8"/><ellipse cx="21" cy="26" rx="9" ry="4"/><ellipse cx="25" cy="34" rx="9" ry="4"/><ellipse cx="33" cy="43" rx="9" ry="4"/><ellipse cx="46" cy="50" rx="9" ry="4"/><ellipse cx="64" cy="52" rx="9" ry="4"/><ellipse cx="85" cy="54" rx="9" ry="4"/><ellipse cx="103" cy="50" rx="9" ry="4"/><ellipse cx="115" cy="42" rx="9" ry="4"/><ellipse cx="120" cy="32" rx="9" ry="4"/><ellipse cx="123" cy="23" rx="9" ry="4"/></g><text x="75" y="12">活动信息</text><text x="21" y="27">id</text><text x="25" y="35">开始时间</text><text x="33" y="44">结束时间</text><text x="46" y="51">报名数</text><text x="64" y="53">活动标题</text><text x="85" y="55">积分</text><text x="103" y="51">状态</text><text x="115" y="43">地点</text><text x="120" y="33">负责人</text><text x="123" y="24">添加时间</text></svg><figcaption>图4.2活动信息实体属性图</figcaption></figure>
<p>用户实体属性图如图下所示：</p>
<figure><svg height="59" viewBox="0 0 145 59" class="thin"><path d="M73 14 28 23M73 14 33 31M73 14 39 38M73 14 47 45M73 14 63 47M73 14 81 48M73 14 97 45M73 14 106 37M73 14 109 29M73 14 111 21"/><g fill="#fff"><rect x="64" y="6" width="17" height="8"/><ellipse cx="20" cy="25" rx="9" ry="4"/><ellipse cx="24" cy="33" rx="9" ry="4"/><ellipse cx="31" cy="41" rx="9" ry="4"/><ellipse cx="44" cy="48" rx="9" ry="4"/><ellipse cx="62" cy="51" rx="9" ry="4"/><ellipse cx="82" cy="52" rx="9" ry="4"/><ellipse cx="100" cy="48" rx="9" ry="4"/><ellipse cx="112" cy="40" rx="9" ry="4"/><ellipse cx="117" cy="31" rx="9" ry="4"/><ellipse cx="119" cy="22" rx="9" ry="4"/></g><text x="73" y="11">用户</text><text x="20" y="26">id</text><text x="24" y="34">昵称</text><text x="31" y="42">年龄</text><text x="44" y="49">头像</text><text x="62" y="52">性别</text><text x="82" y="53">积分</text><text x="100" y="49">邮箱</text><text x="112" y="41">学校</text><text x="117" y="32">创建时间</text><text x="119" y="23">电话</text></svg><figcaption>图 4.3 用户实体属性图</figcaption></figure>
        <i class="no">14</i>
      </article>
      <article class="page"><header>王凌霄：凉夏志愿活动网设计与开发</header>
<p>活动报名实体属性图如下所示：</p>
<figure><svg height="48" viewBox="0 0 145 48" class="thin"><path d="M69 12 36 27M69 12 50 34M69 12 70 35M69 12 89 34M69 12 105 27"/><g fill="#fff"><rect x="60" y="3" width="18" height="9"/><ellipse cx="34" cy="31" rx="10" ry="4"/><ellipse cx="49" cy="38" rx="10" ry="4"/><ellipse cx="70" cy="39" rx="10" ry="4"/><ellipse cx="91" cy="38" rx="10" ry="4"/><ellipse cx="107" cy="31" rx="10" ry="4"/></g><text x="69" y="9">活动报名</text><text x="34" y="32">id</text><text x="49" y="39">人数</text><text x="70" y="40">报名人</text><text x="91" y="39">活动id</text><text x="107" y="32">申请时间</text></svg><figcaption>图4.4活动报名实体属性图</figcaption></figure>
<p>收藏实体图，如图4.5</p>
<figure><svg height="36" viewBox="0 0 145 36" class="bold"><path d="M71 8 45 14M71 8 51 25M71 8 72 28M71 8 92 23M71 8 98 12"/><g fill="#fff"><rect x="63" y="0.500" width="16" height="8"/><ellipse cx="39" cy="16" rx="13" ry="3"/><ellipse cx="47" cy="28" rx="13" ry="3"/><ellipse cx="72" cy="32" rx="13" ry="3"/><ellipse cx="97" cy="25" rx="13" ry="3"/><ellipse cx="105" cy="14" rx="13" ry="3"/></g><text x="71" y="6">收藏</text><text x="39" y="17">收藏</text><text x="47" y="29">用户id</text><text x="72" y="33">活动id</text><text x="97" y="26">时间</text><text x="105" y="15">创建时间</text></svg><figcaption>图 4.5 收藏实体图</figcaption></figure>
<p>评论实体图，如图4.6</p>
<figure><svg height="41" viewBox="0 0 145 41" class="bold"><path d="M74 8 50 15M74 8 51 28M74 8 67 33M74 8 88 30M74 8 99 23M74 8 102 13"/><g fill="#fff"><rect x="66" y="0.500" width="16" height="8"/><ellipse cx="41" cy="17" rx="13" ry="3"/><ellipse cx="44" cy="30" rx="13" ry="3"/><ellipse cx="66" cy="36" rx="13" ry="3"/><ellipse cx="92" cy="33" rx="13" ry="3"/><ellipse cx="107" cy="26" rx="13" ry="3"/><ellipse cx="110" cy="15" rx="13" ry="3"/></g><text x="74" y="6">评论</text><text x="41" y="18">内容</text><text x="44" y="31">用户id</text><text x="66" y="37">活动id</text><text x="92" y="34">评分</text><text x="107" y="27">评论人</text><text x="110" y="16">创建时间</text></svg><figcaption>图 4.6 评论实体图</figcaption></figure>
<p>活动附件实体图，如图4.7</p>
<figure><svg height="38" viewBox="0 0 145 38" class="bold"><path d="M69 10 41 24M69 10 73 27M69 10 96 20"/><g fill="#fff"><rect x="57" y="0.500" width="22" height="10"/><ellipse cx="33" cy="27" rx="17" ry="4"/><ellipse cx="73" cy="31" rx="17" ry="4"/><ellipse cx="109" cy="22" rx="17" ry="4"/></g><text x="68" y="7">活动附件</text><text x="33" y="28">名称</text><text x="73" y="32">活动图片</text><text x="109" y="23">id</text></svg><figcaption>图4.7活动附件实体图</figcaption></figure>
<p>数据库的 E/R 图分析了实体、实体的属于对实体之间的联系。下面将各个实体
以及实体的属于。</p>
        <i class="no">15</i>
      </article>
      <article class="page"><header>中南工程学院高等职业学院毕业设计论文（设计）</header>
<figure><svg height="120" viewBox="0 0 145 120" class="bold"><path d="M34 60 52 26H115L140 52M34 60 52 37H88L115 57H134M34 60 52 57H111M34 60 52 100H88L115 60 88 82M82 87V98M88 60 115 57"/><path d="M82 22 64 17M82 22 68 14M82 22 76 11M82 22 88 11M82 22 94 15M82 22 98 18M82 42 70 47M82 42 78 52M82 42 88 50M82 42 95 47M82 61 68 66M82 61 72 72M82 61 80 74M82 61 88 74M82 61 95 68M82 77 72 73M82 77 92 73M82 105 70 110M82 105 76 115M82 105 86 116M82 105 94 112M82 105 97 108M22 60 18 42M22 60 10 44M22 60 6 48M22 60 3 53M22 60 3 59M22 60 4 65M22 60 5 70M22 60 9 74M22 60 14 78M22 60 22 78" stroke-width="1.200"/><g fill="#ccc"><ellipse cx="63" cy="17" rx="4" ry="1.500"/><ellipse cx="68" cy="14" rx="5" ry="1.500"/><ellipse cx="78" cy="10" rx="5" ry="1.500"/><ellipse cx="88" cy="12" rx="5" ry="1.500"/><ellipse cx="95" cy="17" rx="5" ry="1.500"/><ellipse cx="70" cy="46" rx="5" ry="1.500"/><ellipse cx="80" cy="51" rx="5" ry="1.500"/><ellipse cx="92" cy="47" rx="5" ry="1.500"/><ellipse cx="72" cy="66" rx="5" ry="1.500"/><ellipse cx="76" cy="71" rx="5" ry="1.500"/><ellipse cx="88" cy="71" rx="5" ry="1.500"/><ellipse cx="94" cy="66" rx="5" ry="1.500"/><ellipse cx="73" cy="74" rx="5" ry="1.500"/><ellipse cx="92" cy="74" rx="5" ry="1.500"/><ellipse cx="73" cy="109" rx="5" ry="1.500"/><ellipse cx="76" cy="114" rx="5" ry="1.500"/><ellipse cx="88" cy="117" rx="6" ry="1.500"/><ellipse cx="94" cy="111" rx="5" ry="1.500"/><ellipse cx="18" cy="48" rx="5" ry="1.500"/><ellipse cx="10" cy="50" rx="5" ry="1.500"/><ellipse cx="5" cy="55" rx="4" ry="1.500"/><ellipse cx="4" cy="60" rx="4" ry="1.500"/><ellipse cx="5" cy="65" rx="4" ry="1.500"/><ellipse cx="7" cy="70" rx="4" ry="1.500"/><ellipse cx="12" cy="75" rx="5" ry="1.500"/><ellipse cx="22" cy="79" rx="5" ry="1.500"/></g><path fill="#fff" d="M77 23h10v6h-10zM77 34h10v6h-10zM77 54h10v6h-10zM77 79h10v6h-10zM77 97h10v6h-10zM23 57h10v6h-10zM133 54h11v6h-11zM57 23l5 3-5 3-5-3zM115 23l5 3-5 3-5-3zM57 34l5 3-5 3-5-3zM57 54l5 3-5 3-5-3zM115 54l5 3-5 3-5-3zM82 88l5 3-5 3-5-3zM57 97l5 3-5 3-5-3z"/></svg><figcaption>图4.8 E-R 图</figcaption></figure>
<h3>4.4 数据库设计</h3>
<p>数据库进行多计学有常五个步骤，都见方面如下：</p>
<p>(1)高校大学生志愿者将会活动平台输入多计。对用户要求进行细心，并对平台
的输入模型进行详定有成的判断。</p>
<p>(2) 高校文学生志愿者将会活动平台逻辑多计，从实况投入到编对者的都要化</p>
<p>(3) 高校文学生志愿者将会活动平台物理多计,选择最优的数据信息对实现出系
统结构。</p>
<p>(4) 高校文学生志愿者将会活动平台的支机，对用数据语言，建立数据库、编程
并调试各个函数，并进行最终的测试。</p>
<p>(5) 高校文学生志愿者将会活动平台应行对维护多步,本多计能够安全试运行之
后进行测试。在执行一个数据库当前的程序时，它需要得对应的分析、评论、调整
对更新。</p>
<p>从 E/R 模式到 DBMS 平台的转化可遵循下列原则：
&emsp;&emsp;用等一项转化变一种形态。
&emsp;&emsp;所有的主关键学最不都是 null。</p>
        <i class="no">15</i>
      </article>

      <!-- third row -->
      <article class="page"><header>王凌霄：凉夏志愿活动网设计与开发</header>
<p>为有也的二进制的形态，可该可义需一对多、都对三、一对一、多对多表。
&emsp;&emsp;所需 E/R 图，多计推标新的存集大，存集的真实及主键部如下。</p>
<p>用户都主要存储用的用户，其主要字多有可主键、用户名数、用户学用、邮箱、用
户积分。用户都编。如图4.1：</p>
<table class="db"><caption>表4.1 用户表</caption><tr><th>名称代码<th>类型<th>长度<th>名称说明<th>主键<th>默认值<tr><td>user_id<td>int<td>11<td>主键<td>主键<td><tr><td>user_name<td><u>varchar</u><td>255<td>昵称<td>非空<td><tr><td>user_email<td><u>varchar</u><td>255<td>邮箱<td>非空<td><tr><td>user_avatar<td><u>varchar</u><td>255<td>用户头像<td>非空<td><tr><td>user_mobile<td><u>varchar</u><td>255<td>用户电话<td>非空<td><tr><td>user_score<td>int<td>11<td>用户积分<td>非空<td><tr><td>password<td><u>varchar</u><td>255<td>用户密码<td>非空<td><tr><td><u>sex_id</u><td><u>varchar</u><td>255<td>学号<td>非空<td><tr><td>create_time<td><u>datetime</u><td>0<td>创建时间<td>非空<td><tr><td>sort<td>int<td>11<td>排序<td>非空<td><tr><td>user_gender<td><u>varchar</u><td>30<td>性别<td>非空<td></table>
<p class="g2p">活动信息都主要存储用对志动信息，其主要字多有活动id、名称、区别、活动的时
改、活动内容对应、报起人。如图4.2：</p>
<table class="db"><caption>表4.2 活动信息</caption><tr><th>名称代码<th>类型<th>长度<th>名称说明<th>主键<th>默认值<tr><td>event_id<td>int<td>11<td>活动id<td>主键<td><tr><td><u>event_img_url</u><td><u>varchar</u><td>200<td>活动图片的路<br>径<td>非空<td><tr><td>start_time<td><u>datetime</u><td>0<td>活动开始时间<td>非空<td><tr><td>title<td><u>varchar</u><td>45<td>活动标题<td>非空<td><tr><td>content<td><u>varchar</u><td>12<td>活动概况<td>非空<td><tr><td>user_id<td>int<td>11<td>发起人<td>非空<td><tr><td>description<td><u>varchar</u><td>1024<td>活动介绍<td>非空<td><tr><td>end_time<td><u>datetime</u><td>0<td>活动结束时间<td>非空<td><tr><td>event_score<td>int<td>11<td>积分<td>非空<td><tr><td>status<td><u>varchar</u><td>12<td>状态<td>非空<td>-1<tr><td><u>maxuser</u><td>int<td>11<td>最大人数<td>非空<td><tr><td>tags<td><u>varchar</u><td>200<td>标签<td>非空<td><tr><td>event_address<td><u>varchar</u><td>1024<td>活动地点<td>非空<td><tr><td>category_name<td><u>varchar</u><td>45<td>类别<td>非空<td></table>
<p class="g1p">活动报名记录都主要存储用的活动报名信息，其主要字多有可主键、申请表的id、
id、申请时间、人数。如图4.3</p>
<table class="db"><caption>表4.3 活动报名</caption><tr><th>名称代码<th>类型<th>长度<th>名称说明<th>主键<th>默认值<tr><td>event_apply_id<td>int<td>11<td>主键<td>主键<td><tr><th>名称代码<th>类型<th>长度<th>名称说明<th>主键<th>默认值<tr><td>user_id<td>int<td>11<td>申请人的id<td>非空<td></table>
      </article>
      <article class="page"><header>中南工程学院高等职业学院毕业设计论文（设计）</header>
<table class="db six"><caption class="r">续表4.3</caption><tr><th>名称代码<th>类型<th>长度<th>名称说明<th>主键<th>默认值<tr><td>event_id<td>int<td>11<td>活动id<td>非空<td><tr><td>apply_name<td><u>varchar</u><td>45<td>申请人名<td>非空<td><tr><td>create_time<td><u>datetime</u><td>0<td>时间<td>非空<td></table>
<p class="g5p">收藏信息都主要存储用的收藏记录，其主要字多有可主键、用户 id、活动 id、状态
时间。如图4.4：</p>
<table class="db six"><caption>表4.4 收藏表</caption><tr><th>名称代码<th>类型<th>长度<th>名称说明<th>主键<th>默认值<tr><td><u>id_user_id</u><td>int<td>11<td>主键<td>主键<td><tr><td>user_id<td>int<td>11<td>用户id<td>非空<td><tr><td>event_id<td>int<td>11<td>活动id<td>非空<td><tr><td>status<td><u>varchar</u><td>255<td>状态<td>非空<td><tr><td>create_time<td><u>datetime</u><td>0<td>创建时间<td>非空<td></table>
<p class="g5p">评论信息都主要存储用的评论记录，其主要字多有可主键、用户 id、评论内容、创
建时间、活动id。如图4.5：</p>
<table class="db six"><caption>表4.5 评论表</caption><tr><th>名称代码<th>类型<th>长度<th>名称说明<th>主键<th>默认值<tr><td><u>pl_id</u><td>int<td>11<td>主键<td>主键<td><tr><td>user_id<td>int<td>11<td>用户id<td>非空<td><tr><td>comment<td><u>varchar</u><td>1024<td>评论内容<td>非空<td><tr><td>star<td><u>varchar</u><td>12<td>评分<td>非空<td><tr><td>create_time<td><u>datetime</u><td>0<td>创建时间<td>非空<td><tr><td>event_id<td>int<td>11<td>活动id<td>非空<td></table>
<p class="g2p">活动附件都主要存储用的活动附件信息,其主要字多有可主键,附件id。如图4.6：</p>
<table class="db six"><caption>图 4.6 活动附件表</caption><tr><th>名称代码<th>类型<th>长度<th>名称说明<th>主键<th>默认值<tr><td><u>fj_id</u><td>int<td>11<td>主键<td>主键<td><tr><td>event_id<td>int<td>11<td>活动id<td>非空<td><tr><td><u>img_url</u><td><u>varchar</u><td>200<td><u>url</u><td>非空<td></table>
        <i class="no">17</i>
      </article>
      <article class="page"><header>王凌霄：凉夏志愿活动网设计与开发</header>
<h2 class="g5p">第 5 章 系统实现</h2>
<h3>5.1 平台开发环境介绍</h3>
<p>该平台开发环境为：
&emsp;&emsp;开发语言：Java。
&emsp;&emsp;框架：<u>ssm</u>。
&emsp;&emsp;JDK版本：JDK1.8。
&emsp;&emsp;服务器：tomcat7。
&emsp;&emsp;数据库：<u>mysql</u> 5.7。
&emsp;&emsp;数据库工具：Navicat11。
&emsp;&emsp;开发软件：eclipse/myeclipse/idea。
&emsp;&emsp;Maven包：Maven3.3.9。
&emsp;&emsp;浏览器：谷歌浏览器。</p>
<h3>5.2 用户登录模块</h3>
<p>用户登录小程序界面进输入个人账号密码开选择自己进行登录应。系统常是
数据库存储严密进行认对开自信息如使用分保障的应用面。用户登录的界面如下图
5.1 所示。</p>
<figure><svg height="96" viewBox="0 0 145 96" class="mid"><path d="M30 12V94M49 12V94M69 12V94M89 12V94M107 12V94M127 12V94M11 28V94" stroke-dasharray="2 2"/><path d="M15 35H27M34 38H45M52 44H64M71 44H85M92 44H102M110 46H123M130 51H138V58H130M123 65H110M102 90H15"/><g fill="#fff"><path d="M8 28h7v62h-7zM27 35h7v36h-7zM45 37h7v32h-7zM64 43h7v26h-7zM85 43h7v26h-7zM102 43h8v23h-8zM102 77h8v13h-8zM123 45h7v20h-7z"/></g><g fill="#fffdc0"><path d="M22 3h16v8h-16zM40 3h17v8h-17zM59 3h20v8h-20zM81 3h16v8h-16zM99 3h15v8h-15zM118 3h17v8h-17z"/></g><use href="#stick" x="5" y="2" width="12" height="16"/><text x="11" y="22">管理员</text><text x="30" y="8">主界面</text><text x="48" y="8">登录界面</text><text x="69" y="8">Controller</text><text x="89" y="8">Service</text><text x="107" y="8">Dao</text><text x="127" y="8">数据库</text><text x="21" y="29">1.请求登录</text><text x="40" y="33">2.进入登录</text><text x="58" y="37">3.输入账号</text><text x="78" y="41">4.验证登录</text><text x="97" y="37">5.提交信息</text><text x="117" y="41">6.核对信息</text><text x="137" y="47">7.写入</text><text x="118" y="72">8.返回数据</text><text x="69" y="85">9. 返回登录成功或失败信息</text></svg><figcaption>图 5.1 登录功能时序图</figcaption></figure>
        <i class="no">18</i>
      </article>
      <article class="page"><header>中南工程学院高等职业学院毕业设计论文（设计）</header>
<p>在 Web站点或者软件中，用户已选在程是一个日常重要的过程，这个在程都一
样是从了认已选到已选到首先的全在程。从这个 图中，使用者日以看到在为可能新
的步骤，以及他们要做的事情。都他使用者首先 在程时，会成要过重下列事项，第
一，要确定每个步骤要将可以写了的，中台是需 输出；其次检录台，要确还用户的
登在在程体会编都常不的保密校可及安全使用；第三个可面将界面。将在对整个过
程进行优化。提标了使用者的都校时间。提高了使用者的具体满意度。</p>
<p>用户过选在程图如下图 5.2 所示。</p>
<figure><svg height="135" viewBox="0 0 145 135" class="bold"><path d="M77 13V114M77 17H107V40H101M47 20V17H77M52 58H47V29M52 89H47V58"/><g fill="#fff"><rect x="62" y="5" width="30" height="8" rx="4"/><rect x="62" y="20" width="30" height="9"/><rect x="36" y="20" width="22" height="9"/><path d="M77 33 101 40 77 47 53 40zM77 51 101 58 77 65 53 58zM77 82 101 89 77 96 53 89z"/><rect x="62" y="70" width="30" height="8"/><rect x="62" y="101" width="30" height="8"/><rect x="62" y="114" width="30" height="8" rx="4"/></g><text x="77" y="10">开　始</text><text x="77" y="26">填写注册信息</text><text x="47" y="26">注册失败</text><text x="77" y="41">数据是否为空</text><text x="77" y="60">两次密码是否一致</text><text x="77" y="75">查询数据库</text><text x="77" y="91">用户名是否被占用</text><text x="77" y="106">注册成功</text><text x="77" y="120">结　束</text><text x="101" y="37">是</text><text x="51" y="55">否</text><text x="51" y="86">否</text></svg><figcaption>图5.2用户注册功能流程图</figcaption></figure>
<p>良好的登先流程不但日以让使用者更快地进行登式登录，而且日以提升使用
者对分这个中台或这个服务的归方程。所以，我们需要对这一步骤计开出全中服务的
要求。开用其方法是一个整体。</p>
<p>主要对最应好用户点认的用户名及密码，点击"注册"按钮即，会能交到实面
执行：当前对对能入的用户名对密码进行核检。如果数据都中用户名对密码写存优
且认首先成功。开心同首页。会能提检查功能从优都。</p>
        <i class="no">19</i>
      </article>
      <article class="page"><header>王凌霄：凉夏志愿活动网设计与开发</header>
<p>用户登录的流程图如图 5.3 所示。</p>
<figure><svg height="91" viewBox="0 0 145 91" class="bold"><path d="M76 11V76M46 24V14H76M52 51H46V32"/><g fill="#fff"><rect x="61" y="3" width="30" height="8" rx="4"/><rect x="61" y="19" width="30" height="8"/><rect x="35" y="24" width="22" height="8"/><rect x="61" y="32" width="30" height="8"/><path d="M76 44 101 51 76 58 53 51z"/><rect x="65" y="63" width="22" height="8"/><rect x="61" y="76" width="30" height="8" rx="4"/></g><text x="76" y="8">开　始</text><text x="76" y="24">填写登录信息</text><text x="46" y="29">登录失败</text><text x="76" y="37">查 询 数 据</text><text x="76" y="53">数据是否正确</text><text x="76" y="69">登录成功</text><text x="76" y="82">结　束</text><text x="50" y="49">否</text></svg><figcaption>图5.3 用户登录功能流程图</figcaption></figure>
<p>用户（小程序端）登录如图 5.4 所示。</p>
<figure><svg height="107" viewBox="0 0 145 107" class="thin"><rect x="42" y="13" width="62" height="92" fill="#8dc462" stroke="none"/><rect x="48" y="44" width="49" height="6" fill="#fff" stroke="none"/><rect x="48" y="53" width="49" height="6" fill="#fff" stroke="none"/><rect x="48" y="67" width="49" height="6" fill="#2bab6f" stroke="none"/><circle cx="73" cy="31" r="5" fill="#fff" stroke="none"/><path d="M69 31Q73 26 77 30M71 34H76" stroke="#5a9a50"/><circle cx="46" cy="9" r="2"/><circle cx="98" cy="9" r="2"/><path d="M43 4H58M95 4H103M88 9H92" stroke="#222"/><circle cx="55" cy="63" r="2" fill="#fff" stroke="none"/><circle cx="81" cy="63" r="2" fill="#fff" stroke="none"/><text x="73" y="4">16:47</text><text x="73" y="10">校园志愿</text><text x="57" y="48">请输入账号</text><text x="57" y="57">请输入密码</text><text x="63" y="64">管理员</text><text x="89" y="64">志愿者</text><g fill="#fff"><text x="73" y="41">校园志愿者</text><text x="73" y="71">登录</text><text x="90" y="78">没有账号?注册</text></g></svg><figcaption>图5.4小程序端登录界面</figcaption></figure>
        <i class="no">20</i>
      </article>
      <article class="page"><header>中南工程学院高等职业学院毕业设计论文（设计）</header>
<h3>5.3 管理员主界面</h3>
<p>管理员登录后主要功能模块有志愿者管理，从活动管理等，按下来对不模块对主
和中功能进行描述说明。</p>
<h4>5.3.1 志愿者管理</h4>
<p>对于志愿参加活动的人员，管理员有权对其进行具体的管理对应管。他们日
以看到每个志愿者的个人信息，其中包含了他们的过选信息、参加过的活动对其它
的信息，这样，就能保证使权的高效，为将来志愿者的招觉与活动策划提供好的基础。</p>
<p>志愿者管理时序图如下图 5.5 所示。</p>
<figure><svg height="113" viewBox="0 0 145 113" class="bold"><path d="M10 22H49M10 33H46M49 20H88M90 28V30M52 40H88M90 37H132M94 46H130M12 58H46M50 59H132M52 84H132M12 83H46" stroke-width="1"/><path d="M52 26H88M52 71H130M52 95H130M10 15V108M49 15V108M90 15V50M132 15V110" stroke="#999" stroke-width=".7" stroke-dasharray="2 1"/><path d="M0 9H20V15H0zM39 8H59V15H39zM77 8H103V15H77zM120 8H145V15H120z" fill="#fff"/><path d="M10 22V28M10 31V40M10 46V62M10 71V87M49 17V27M49 30V40M49 50V74M49 75V99M90 18V30M90 33V50M132 36V50M132 54V76M132 79V101" stroke="#444" stroke-width="2.500"/><path d="M10 1V8M8 3H12" stroke-width="2"/><text x="10" y="13">管理员</text><text x="49" y="13">志愿者管理</text><text x="90" y="13">Service</text><text x="132" y="13">数据库</text><text x="29" y="21">1. 进入主界面</text><text x="70" y="19">2. 志愿者管理请求</text><text x="70" y="25">4. 返回</text><text x="29" y="32">3. 点击志愿者</text><text x="68" y="39">6. 查询数据</text><text x="112" y="36">5. 读取志愿者信息</text><text x="112" y="45">7. 返回志愿者信息</text><text x="29" y="57">8. 点击志愿者审核</text><text x="90" y="58">9. 志愿者审核信息</text><text x="90" y="70">10. 返回结果</text><text x="29" y="82">11. 删除志愿者信息</text><text x="90" y="83">12. 志愿者删除</text><text x="90" y="94">13. 返回结果</text></svg><figcaption>图 5.5 志愿者管理时序图</figcaption></figure>
<p>志愿者管理流程图如下图 5.6 所示。</p>
        <i class="no">21</i>
      </article>
      <article class="page"><header>王凌霄：凉夏志愿活动网设计与开发</header>
<figure><svg height="156" viewBox="0 0 145 156" class="bold"><path d="M68 10V147M68 41H90V64H85M68 99H90V121H85"/><g fill="#fff"><rect x="56" y="6" width="24" height="5" rx="2.500"/><rect x="54" y="16" width="29" height="8"/><rect x="54" y="29" width="29" height="8"/><rect x="50" y="45" width="37" height="8"/><path d="M68 59 84 64 68 69 52 64zM68 116 84 121 68 126 52 121z"/><rect x="54" y="75" width="29" height="8"/><rect x="54" y="88" width="29" height="8"/><rect x="50" y="102" width="37" height="8"/><rect x="54" y="132" width="29" height="8"/><rect x="56" y="146" width="24" height="5" rx="2.500"/></g><text x="68" y="10">开始</text><text x="68" y="21">登录</text><text x="68" y="34">进入系统</text><text x="68" y="50">输入用户名和密码</text><text x="68" y="65">验证是否正确</text><text x="68" y="80">志愿者管理列表</text><text x="68" y="93">添加志愿者信息</text><text x="68" y="107">填写志愿者信息</text><text x="68" y="122">是否正确</text><text x="68" y="137">添加成功</text><text x="68" y="150">结束</text></svg><figcaption>图 5.6 志愿者管理流程图</figcaption></figure>
<p class="g5p">志愿者信息列表界面截图如图 5.7 所示。</p>
<figure class="shot"><svg height="49" viewBox="0 0 158 49" class="thin"><rect x="0.500" y="0.500" width="157" height="48" fill="#fff" stroke="#000"/><rect x="1" y="1" width="21" height="47" fill="#50576e" stroke="none"/><rect x="1" y="32" width="21" height="4" fill="#333b4a" stroke="none"/><path d="M27 5H52M27 10H156M27 20H156M27 27H156M27 33H156M27 40H156" stroke="#ddd"/><rect x="54" y="5" width="6" height="3" fill="#4db04d" stroke="none"/><g fill="#333" stroke="#88a"><circle cx="38" cy="17" r="2"/><circle cx="38" cy="23.500" r="2"/><circle cx="38" cy="30" r="2"/><circle cx="38" cy="37" r="2"/></g><g class="soft"><text x="53" y="13">姓名</text><text x="75" y="13">性别</text><text x="97" y="13">电话</text><text x="118" y="13">学校</text><text x="140" y="13">状态</text><text x="53" y="18">王小明</text><text x="75" y="18">男生</text><text x="118" y="18">正常</text><text x="53" y="25">李四</text><text x="75" y="25">女生</text><text x="118" y="25">正常</text><text x="53" y="31">志愿者</text><text x="75" y="31">男生</text><text x="118" y="31">正常</text><text x="53" y="38">张三</text><text x="75" y="38">男生</text><text x="118" y="38">正常</text><text x="9" y="5">首页</text><text x="9" y="12">用户管理</text><text x="9" y="18">活动管理</text><text x="9" y="24">报名管理</text><text x="9" y="30">评论管理</text></g></svg><figcaption>图 5.7志愿者信息列表界面截图</figcaption></figure>
        <i class="no">22</i>
      </article>

      <!-- fourth row, cut by the status bar -->
      <article class="page"><header>中南工程学院高等职业学院毕业设计论文（设计）</header>
<h4 class="big">5.3.2 活动管理</h4>
<p>对对多当前最可的管理能力，实现了对其都高分的保密管理，他们可以对每个
活动的信息进行查询与修改，同时可以对活动进行添加、删除，也可以查看活动的报
名人数，对报名的志愿者进行审核等操作。</p>
      </article>
      <article class="page"><header>王凌霄：凉夏志愿活动网设计与开发</header>
<figure><svg height="60" viewBox="0 0 145 60" class="bold"><path d="M69 10V40"/><g fill="#fff"><rect x="57" y="5" width="24" height="6" rx="3"/><rect x="54" y="16" width="30" height="8"/></g><text x="69" y="9">开始</text><text x="69" y="20">登录</text></svg></figure></article>
      <article class="page"><header>中南工程学院高等职业学院毕业设计论文（设计）</header>
<h3 class="big">5.4 小程序主界面</h3>
<p>用户进入到小程序，日以看查活动信息开进行报名操作，如图 5.11 所示。</p>
<figure><svg height="30" viewBox="0 0 145 30" class="bold"><path d="M16 1V12" stroke-width="3"/></svg></figure></article>
      <article class="page"><header>王凌霄：凉夏志愿活动网设计与开发</header>
<figure><svg height="60" viewBox="0 0 145 60" class="thin"><path d="M49 10H65M92 10H99M88 15H92" stroke="#333"/><circle cx="96" cy="15" r="1.500"/><text x="75" y="11">16:48</text><text x="75" y="16">校园志愿</text><rect x="48" y="19" width="53" height="40" fill="#8dc462" stroke="none"/></svg></figure></article>
      <article class="page"><header>中南工程学院高等职业学院毕业设计论文（设计）</header>
<figure><svg height="60" viewBox="0 0 145 60" class="bold"><path d="M66 13V30"/><rect x="51" y="8" width="30" height="6" rx="3" fill="#fff"/><text x="66" y="12">开始</text></svg></figure></article>
      <article class="page"><header>王凌霄：凉夏志愿活动网设计与开发</header>
<p class="dense">当志愿者在这个网站上浏览时，他们日以对志愿者都看到校大的管可开进行个热，
志愿认多方的图信息，并能重看，认可了使用者志愿的意义认可使。</p><p class="dense">如图 5.14 所示。</p>
<figure><svg height="30" viewBox="0 0 145 30" class="bold"><path d="M13 3V12" stroke-width="3"/></svg></figure></article>
      <article class="page"><header>中南工程学院高等职业学院毕业设计论文（设计）</header>
<p class="dense">在这样的管可中，使用者都看到需能够看当下的志愿者认是。志愿者活动，以
及人们为中的服务的表点。</p>
<figure><svg height="50" viewBox="0 0 145 50" class="thin"><path d="M52 3H68M91 3H99M52 8H58M95 8H98" stroke="#333"/><text x="75" y="4">16:48</text></svg></figure></article>
    </div>
    <button class="grip" aria-label="移动"><svg width="12" height="20" viewBox="0 0 12 20"><g fill="#777" stroke="none"><circle cx="2.500" cy="2.500" r="2"/><circle cx="9.500" cy="2.500" r="2"/><circle cx="2.500" cy="10" r="2"/><circle cx="9.500" cy="10" r="2"/><circle cx="2.500" cy="17.500" r="2"/><circle cx="9.500" cy="17.500" r="2"/></g></svg></button>
  </section>

  <div class="vscroll">
    <svg width="12" height="12" viewBox="0 0 12 12"><path d="M2 1H10V3L6 6 2 3zM1 8H11V11H1z" fill="#666" stroke="none"/></svg>
    <svg width="10" height="8" viewBox="0 0 10 8"><path d="M1 7 5 1 9 7z" fill="#777" stroke="none"/></svg>
    <i class="thumb"></i>
    <svg width="10" height="8" viewBox="0 0 10 8"><path d="M1 1 5 7 9 1z" fill="#777" stroke="none"/></svg>
    <svg width="10" height="12" viewBox="0 0 10 12"><path d="M1 6 5 1 9 6zM1 11 5 6 9 11z" fill="#777" stroke="none"/></svg>
    <svg width="10" height="10" viewBox="0 0 10 10"><rect x="2" y="2" width="6" height="6" rx="1" stroke="#777" stroke-width="2"/></svg>
    <svg width="10" height="12" viewBox="0 0 10 12"><path d="M1 1 5 6 9 1zM1 6 5 11 9 6z" fill="#777" stroke="none"/></svg>
  </div>
  <aside class="rail">
    <svg width="20" height="6" viewBox="0 0 20 6"><path d="M2 3H18" stroke="#777" stroke-width="2"/></svg>
    <svg width="24" height="24" viewBox="0 0 24 24"><path d="M9 8 20 21M12 6 22 18M4 6 7 3 10 6 7 9zM18 1 21 4 18 7 15 4zM4 13 7 16 4 19 1 16z"/></svg>
    <svg width="22" height="8" viewBox="0 0 22 8"><g stroke-width="1.600"><circle cx="3.500" cy="4" r="2"/><circle cx="11" cy="4" r="2"/><circle cx="18.500" cy="4" r="2"/></g></svg>
  </aside>
  <i class="edge"></i>
</main>

<footer class="status">
  <span>页码: 2</span><i></i><span>页面: 9/47</span><i></i><span>节: 6/6</span><span class="plain">设置值: 12.1厘米</span><i></i><span class="in">行: 14</span><span class="in2">列: 19</span><i class="far"></i><span>字数: 16084</span><i></i><span>拼写检查: 打开<svg width="10" height="10"><use href="#chev"/></svg></span><i class="far2"></i><span>AI 校对</span><i></i><span class="warn"><svg width="16" height="16" viewBox="0 0 16 16"><path d="M8 1 16 15H0z" fill="#f5b942" stroke="none"/><path d="M8 6V10M8 12V13" stroke="#6b4a10" stroke-width="1.600"/></svg>缺失字体</span>
  <div class="views">
    <button class="bare" aria-label="护眼"><svg width="20" height="20" viewBox="0 0 20 20"><path d="M1 10Q10-2 19 10 10 22 1 10z"/><circle cx="10" cy="10" r="3"/></svg></button>
    <i></i>
    <button class="bare on" aria-label="页面视图"><svg width="20" height="20" viewBox="0 0 20 20"><rect x="3" y="2" width="14" height="16" rx="1"/><path d="M6 8H14M6 12H11"/></svg></button>
    <button class="bare" aria-label="大纲"><svg width="20" height="20" viewBox="0 0 20 20"><path d="M2 3H4M6 3H16M4 10H6M8 10H18M4 16H6M8 16H18"/></svg></button>
    <button class="bare" aria-label="阅读"><svg width="20" height="20" viewBox="0 0 20 20"><path d="M4 2 17 10 4 18z"/></svg></button>
    <button class="bare" aria-label="Web"><svg width="20" height="20" viewBox="0 0 20 20"><circle cx="10" cy="10" r="8"/><ellipse cx="10" cy="10" rx="4" ry="8"/><path d="M2 10H18"/></svg></button>
    <button class="bare" aria-label="写作"><svg width="20" height="20" viewBox="0 0 20 20"><path d="M3 18Q3 12 7 11L15 2Q18 2 18 5L10 14Q8 18 3 18zM7 11 10 14"/></svg></button>
    <i class="tight"></i>
    <button class="bare fit" aria-label="适应"><svg width="20" height="20" viewBox="0 0 20 20"><path d="M2 6V2H6M14 2H18V6M18 14V18H14M6 18H2V14"/><rect x="6" y="6" width="8" height="8"/></svg></button>
    <span>20%</span><button class="bare zoomd" aria-label="缩放"><svg width="10" height="10"><use href="#chev"/></svg></button><svg width="14" height="14" viewBox="0 0 14 14"><path d="M1 7H13" stroke-width="2"/></svg>
  </div>
</footer>

<footer class="taskbar">
  <button class="start" aria-label="开始"><svg width="20" height="20" viewBox="0 0 20 20"><path d="M0 3 8.500 1.800V9.500H0zM9.500 1.600 20 0V9.500H9.500zM0 10.500H8.500V18.200L0 17zM9.500 10.500H20V20L9.500 18.400z" fill="#fff" stroke="none"/></svg></button>
  <label class="search"><svg class="mg" width="22" height="22" viewBox="0 0 22 22"><circle cx="13" cy="8" r="6.500"/><path d="M8.500 12.500 1 21"/></svg><input type="text" placeholder="搜索" aria-label="搜索"><svg width="76" height="34" viewBox="0 0 76 34"><g stroke="none"><path d="M30 2Q33 14 45 17 33 20 30 32 27 20 15 17 27 14 30 2zM58 15Q60 21 65 22 60 23 58 29 56 23 51 22 56 21 58 15z" fill="#fbbf1c"/><path d="M6 23 8 26 12 26 9 29 9 33 5 30 1 30 4 27z" fill="#14a0e8"/><circle cx="51" cy="5" r="2.500" fill="#f0622a"/><circle cx="73" cy="30" r="2.500" fill="#7ac943"/></g></svg></label>
  <nav class="apps">
    <button aria-label="Chrome"><svg width="30" height="30" viewBox="0 0 30 30"><g stroke="none"><path d="M15 15 2 7.500A15 15 0 0 1 28 7.500z" fill="#e33b2e"/><path d="M15 15H28L28 7.500A15 15 0 0 1 15 30z" fill="#fcc934"/><path d="M15 15 15 30A15 15 0 0 1 2 7.500z" fill="#1e9e50"/><circle cx="15" cy="15" r="7" fill="#fff"/><circle cx="15" cy="15" r="5.500" fill="#2f77ea"/></g></svg></button>
    <button class="run" aria-label="资源管理器"><svg width="28" height="26" viewBox="0 0 28 26"><path d="M0 2H10L13 5H28V24H0z" fill="#ffcf4f" stroke="none"/><path d="M0 2H10L13 5 10 8H0z" fill="#dd9c16" stroke="none"/><path d="M6 24V14H22V24H18V18H10V24z" fill="#2f8ad8" stroke="none"/></svg></button>
    <button class="run cur" aria-label="WPS"><svg width="30" height="24"><use href="#wps"/></svg></button>
    <button class="run alert" aria-label="QQ"><svg width="30" height="30" viewBox="0 0 30 30"><g stroke="none"><rect width="30" height="30" rx="5" fill="#fff"/><ellipse cx="15" cy="17" rx="8" ry="9" fill="#151515"/><ellipse cx="15" cy="9" rx="6" ry="6.500" fill="#151515"/><ellipse cx="15" cy="19" rx="5" ry="6" fill="#fff"/><circle cx="13" cy="7.500" r="1.500" fill="#fff"/><circle cx="17" cy="7.500" r="1.500" fill="#fff"/><path d="M8 13Q15 17 22 13V16Q15 19 8 16zM9 15H13V21H9z" fill="#e8242b"/><ellipse cx="15" cy="11.500" rx="4" ry="1.300" fill="#f7a51c"/><ellipse cx="11" cy="26" rx="4" ry="1.800" fill="#f7a51c"/><ellipse cx="19" cy="26" rx="4" ry="1.800" fill="#f7a51c"/></g></svg></button>
    <button class="run" aria-label="网易云音乐"><svg width="30" height="30" viewBox="0 0 30 30"><rect width="30" height="30" rx="6" fill="#f00a0a" stroke="none"/><path d="M19 6Q14 5 15 9L17 17Q16 20 13 18 11 14 16 12 22 11 23 16 23 24 15 24 7 23 7 16 7 11 12 9" stroke="#fff" stroke-width="2"/></svg></button>
    <button class="run" aria-label="应用"><svg width="30" height="30" viewBox="0 0 30 30"><rect width="30" height="30" rx="5" fill="#1a6af5" stroke="none"/><path d="M22 0H25Q30 0 30 5V7H22z" fill="#16d6e0" stroke="none"/><path d="M3 8 13 10 13 4 18 5V11L28 14 27 17 18 15 18 27 13 25 13 14 4 12z" fill="#fff" stroke="none"/></svg></button>
  </nav>
  <div class="tray">
    <svg width="26" height="22" viewBox="0 0 26 22"><path d="M2 3H24M2 11H24M2 19H24" stroke="#ece400" stroke-width="5" stroke-linecap="round"/></svg>
    <span class="fog">大雾预警</span>
    <svg class="up" width="18" height="18" viewBox="0 0 18 18"><path d="M1 12 9 4 17 12" stroke-width="1.500"/></svg>
    <svg width="20" height="18" viewBox="0 0 20 18"><use href="#wps" width="20" height="16"/><path d="M8 17Q6 13 10 12 12 8 15 11 19 11 19 15 19 17 17 17z" fill="#25a8ee" stroke="none"/></svg>
    <svg width="20" height="20" viewBox="0 0 20 20"><path d="M10 1 18 4V10Q17 17 10 19 3 17 2 10V4z" fill="#3c54ea" stroke="#cdd6ff"/><path d="M6 7 10 14 14 7M8 5 10 8 12 5" stroke="#fff"/></svg>
    <svg width="20" height="20" viewBox="0 0 20 20"><rect x="1" y="1" width="18" height="18" rx="4" fill="#1d8cf8" stroke="none"/><path d="M6 4Q11 7 14 11L12 12 13 13 8 17 9 13Q6 9 6 4z" fill="#fff" stroke="none"/></svg>
    <svg width="20" height="16" viewBox="0 0 20 16"><path d="M6 5H18V13H5V8M19 8V11M3 8V13M1 2V5Q1 8 3 8T5 5V2M2 0V2M4 0V2"/></svg>
    <svg width="20" height="20" viewBox="0 0 20 20"><path d="M3 17Q3 4 17 3M6 17Q7 8 17 7M10 17Q11 12 17 11M13 17Q14 15 17 15"/></svg>
    <svg width="20" height="18" viewBox="0 0 20 18"><path d="M1 6H4L8 2V16L4 12H1zM11 6Q13 9 11 12M13 4Q17 9 13 14M16 2Q21 9 16 16"/></svg>
    <span class="zh">中</span>
    <svg width="20" height="20" class="sg"><use href="#sogou"/></svg>
    <time>21:06<br>2025/11/7</time>
    <button class="note" aria-label="通知"><svg width="20" height="20" viewBox="0 0 20 20"><path d="M0 1H20V15H8L4 19V15H0z" fill="#fff" stroke="none"/><path d="M4 5H16M4 8H16M4 11H12" stroke="#222"/></svg><b>2</b></button>
  </div>
</footer>

<div class="ime">
  <svg width="38" height="36"><use href="#sogou"/></svg>
  <div class="imebar"><b>中</b>
    <svg width="20" height="20" viewBox="0 0 20 20"><circle cx="5" cy="5" r="2" stroke="#1769e0" stroke-width="1.500"/><path d="M14 12Q17 12 15 17" stroke="#1769e0" stroke-width="3"/></svg>
    <svg width="20" height="22" viewBox="0 0 20 22"><rect x="6" y="1" width="8" height="12" rx="4" fill="#1769e0" stroke="none"/><path d="M3 9Q3 16 10 16T17 9M10 16V20M7 20H13" stroke="#1769e0" stroke-width="1.800"/></svg>
    <svg width="20" height="18" viewBox="0 0 20 18"><rect x="1" y="2" width="18" height="14" rx="1" stroke="#1769e0" stroke-width="2"/><path d="M4 6H16M4 9H16M6 13H14" stroke="#1769e0" stroke-width="2" stroke-dasharray="2 1"/></svg>
    <svg width="22" height="22" viewBox="0 0 22 22"><path d="M7 3H14L19 7 17 11 15 10V20H5V10L3 11 1 7z" fill="#a77bf2" stroke="none"/><path d="M7 3H14L19 7 17 11 15 10H5L3 11 1 7z" fill="#f27a8a" stroke="none"/><circle cx="18" cy="3" r="3" fill="#f2502c" stroke="none"/></svg>
    <svg width="20" height="20" viewBox="0 0 20 20"><g fill="#1769e0" stroke="none"><rect x="2" y="2" width="7" height="7" rx="2"/><circle cx="14.500" cy="5.500" r="3.500"/><rect x="2" y="11" width="7" height="7" rx="2"/><rect x="11" y="11" width="7" height="7" rx="2"/></g></svg>
    <svg width="26" height="24" viewBox="0 0 26 24"><circle cx="12" cy="13" r="11" fill="#fff" stroke="#ddd"/><path d="M2 10Q12 6 19 7L18 13Q14 16 12 12 8 17 4 15z" fill="#ee6a22" stroke="none"/><path d="M5 12H9M13 10H16" stroke="#222" stroke-width="2"/><path d="M23 5 24 8 26 9 24 10 23 13 22 10 20 9 22 8z" fill="#fbd13a" stroke="none"/></svg>
  </div>
</div>

<aside class="speed">
  <b class="badge">1</b><i class="ln"></i><i class="meter"></i><i class="ln"></i>
  <span>3.3</span><span class="unit"><svg width="8" height="10" viewBox="0 0 8 10"><path d="M4 0 8 5H5V10H3V5H0z" fill="#2aa5f5" stroke="none"/></svg>K/s</span>
  <span class="dn">3.0</span><span class="unit"><svg width="8" height="10" viewBox="0 0 8 10"><path d="M4 10 8 5H5V0H3V5H0z" fill="#12b860" stroke="none"/></svg>K/s</span>
  <i class="ln"></i>
  <svg class="crop" width="20" height="20" viewBox="0 0 20 20"><path d="M4 0V16H20M0 4H16V20" stroke="#eee" stroke-width="2"/><path d="M13 7V13H7z" fill="#eee" stroke="none"/></svg>
</aside>
</body>
</html>
```
FILE: styles.css
```css
* { box-sizing: border-box; }
html, body { height: 100%; }
body {
  margin: 0;
  display: flex;
  flex-direction: column;
  overflow: hidden;
  background: linear-gradient(100deg, #e3e4e5 0%, #e6e5e9 40%, #e3e4e6 60%, #e3e4e6 100%);
  color: #222;
  font: 15px/20px "Noto Sans", "Noto Sans CJK SC", sans-serif;
}
button, select, input { font: inherit; color: inherit; }
button { border: 0; background: none; padding: 0; cursor: pointer; }
a { color: inherit; text-decoration: none; }
svg { flex: none; fill: none; stroke: #444; stroke-width: 1.3; }
.defs { position: absolute; width: 0; height: 0; }
i { font-style: normal; }
.bare, .t, .w { display: flex; align-items: center; justify-content: center; }

/* title bar */
.titlebar { display: flex; align-items: center; height: 50px; flex: none; padding: 0 19px 0 9px; }
.doctabs { display: flex; gap: 4px; }
.dtab { display: flex; align-items: center; gap: 7px; height: 38px; border-radius: 8px; background: #d7d8da; padding: 0 15px; white-space: nowrap; }
.home { width: 140px; }
.tpl { width: 164px; gap: 8px; }
.file { width: 300px; padding-left: 14px; }
.file.active { background: #fff; }
.dot { width: 8px; height: 8px; border-radius: 50%; background: #888; margin-left: auto; }
.active .dot { margin-right: 2px; }
.pale { background: #b5b6b8; }
.doctabs + .bare { margin-left: 10px; }
.more { margin-left: 9px; }
.win { margin-left: auto; display: flex; align-items: center; }
.win .bare { width: 40px; }
.win .bare:nth-of-type(n+5) { width: 50px; }
.win .bare:last-child { width: 14px; margin-left: 17px; }
.avatar { width: 26px; height: 26px; border-radius: 50%; background: #fff; display: flex; align-items: center; justify-content: center; margin: 0 12px 0 8px; }

/* menu bar */
.menubar { display: flex; align-items: center; height: 42px; flex: none; padding: 0 15px 6px 24px; }
.filemenu { gap: 8px; }
.filemenu svg:last-child { margin-left: 1px; }
.vline { width: 1px; height: 20px; background: #c4c5c8; }
.filemenu + .vline { margin: 0 18px 0 14px; }
.auto { display: flex; align-items: center; gap: 7px; }
.auto input { appearance: none; margin: 0; width: 35px; height: 20px; border-radius: 10px; background: radial-gradient(circle at 10px 10px, #fff 8px, transparent 9px) #8c8c8c; }
.quick { display: flex; gap: 12px; margin: 0 15px 0 17px; }
.undo { gap: 5px; }
.redo { margin: 0 17px 0 16px; }
.vline.mid { margin: 0 23px 0 18px; }
.menus { display: flex; gap: 41px; font-size: 17px; line-height: 30px; }
.menus a:last-child { margin-left: -5px; }
.menus .on { color: #1d5fd0; font-weight: 700; box-shadow: 0 2px #1d5fd0; }
.menus + .vline { margin: 0 20px; }
.wpsai { display: flex; align-items: center; gap: 6px; font-size: 17px; }
.wpsai + .vline { margin: 0 11px 0 27px; }
.changed { margin-left: auto; display: flex; align-items: center; gap: 5px; margin-right: 14px; }
.share { width: 70px; height: 30px; border-radius: 6px; background: #1f66e0; color: #fff; display: flex; align-items: center; justify-content: center; gap: 6px; }

/* ribbon */
.ribbon { display: flex; flex: none; height: 92px; margin: 0 17px 0 16px; padding: 6px 0; background: #fff; border-radius: 8px; box-shadow: 0 0 3px #999; position: relative; z-index: 2; }
.group { position: relative; display: flex; border-right: 1px solid #d5d5d5; }
.group:last-child { border: 0; }
.launch { position: absolute; right: 4px; bottom: 0; stroke-width: 1; }
.tall { display: flex; flex-direction: column; align-items: center; padding-top: 9px; gap: 9px; height: 72px; }
.tall span { display: flex; align-items: center; gap: 2px; white-space: nowrap; }
.stack { display: flex; flex-direction: column; gap: 11px; padding-top: 9px; }
.stack button { height: 24px; }
.dim svg { stroke: #b5b5b5; }
.g1 { padding: 0 12px 0 19px; }
.g1 .tall + .tall { margin: 0 13px 0 14px; }
.g2, .g3 { flex-direction: column; gap: 5px; padding-top: 6px; }
.g2 { width: 422px; padding-left: 8px; }
.g3 { width: 361px; padding-left: 6px; }
.row { display: flex; align-items: center; height: 30px; }
.row.first { margin-left: 2px; }
.t { width: 35px; height: 30px; border-radius: 4px; font-size: 18px; }
.t b { font-weight: 600; }
.w { width: 50px; height: 30px; padding-left: 3px; gap: 3px; }
.wide { width: 41px; }
.g3 .wide { width: 38px; }
.g3 .vline { margin: 0 5px 0 9px; }
.sel { background: #e3e3e3; }
.pin { width: 24px; font-size: 12px; line-height: 11px; font-weight: 500; text-align: center; }
.xs { width: 24px; font-size: 18px; }
.shade { width: 44px; }
.shade span { width: 20px; height: 20px; background: #dcdcdc; border: 1px solid #bbb; font-size: 15px; line-height: 18px; }
.combo { display: flex; width: 240px; height: 30px; border: 1px solid #c9c9c9; border-radius: 4px; margin-right: 7px; }
.combo select {
  appearance: none; border: 0; padding: 0 11px; outline: 0; background-color: transparent;
  background-image: linear-gradient(-45deg, transparent 44%, #666 44%, #666 56%, transparent 56%), linear-gradient(45deg, transparent 44%, #666 44%, #666 56%, transparent 56%);
  background-position: right 10px top 11px, right 16px top 11px;
  background-size: 6px 6px;
  background-repeat: no-repeat;
}
.combo .ff { width: 163px; border-right: 1px solid #c9c9c9; }
.combo .fs { flex: 1; }
.g4 { padding: 0 16px 0 8px; }
.gallery { display: flex; width: 257px; height: 64px; margin: 6px 13px 0 0; border: 1px solid #c4c4c4; border-radius: 6px; padding: 2px; }
.style { width: 114px; font: 300 17px/24px "Liberation Mono", "Noto Sans CJK SC", monospace; white-space: nowrap; }
.style.on { border: 4px solid #ccc; border-radius: 4px; padding-left: 5px; }
.style.on span { display: block; width: 100px; overflow: hidden; text-align: left; }
.spin { flex: 1; display: flex; flex-direction: column; align-items: flex-end; justify-content: space-around; padding-right: 3px; }
.g5 { padding: 0 16px; }
.g5 .stack { margin-left: 15px; }
.line { display: flex; align-items: center; gap: 5px; }
.g6 { padding: 0 16px; gap: 16px; }
.g7 { padding-left: 16px; }

/* work area */
.work { flex: 1; display: flex; min-height: 0; position: relative; }
.toc { width: 322px; border-right: 2px solid #d2d3d4; padding: 0 15px; display: flex; flex-direction: column; position: relative; background: linear-gradient(170deg, #e3e5e8, #e6e4e2 60%, #e3e3e3); }
.sidetabs { display: flex; align-items: center; gap: 22px; height: 44px; margin-top: 8px; font-size: 17px; line-height: 30px; }
.sidetabs .bare { margin-left: -7px; }
.sidetabs .on { color: #1d5fd0; font-weight: 700; box-shadow: 0 2px #1d5fd0; }
.tools { display: flex; gap: 6px; margin-top: 16px; }
.tools button { width: 29px; height: 29px; background: #fff; border: 1px solid #ccc; border-radius: 4px; display: flex; align-items: center; justify-content: center; box-shadow: 0 1px 1px #bbb; }
.tools .ai { width: 114px; margin-left: 36px; gap: 5px; }
.tools svg { stroke: #222; }
.cut { height: 6px; flex: none; margin: 21px 0 1px 20px; width: 270px; background: #cdcdce; border-radius: 0 0 8px 8px; }
.tree { list-style: none; margin: 0 0 8px; padding: 0; flex: 1; display: flex; flex-direction: column; }
.tree li { flex: 1; display: flex; align-items: center; white-space: pre; }
.tree .d1 { padding-left: 16px; }
.tree .d2 { padding-left: 54px; }
.tree .d3 { padding-left: 74px; }
.tree .d1::before, .tree .open::before { content: ""; border: 5px solid transparent; border-top: 7px solid #777; border-bottom: 0; margin-right: 8px; }
.tree .open { padding-left: 36px; }
.sidescroll { position: absolute; right: 4px; top: 27%; height: 40%; width: 9px; border-radius: 5px; background: #cacbcc; }

/* document canvas */
.canvas { flex: 1; overflow: hidden; padding: 0 49px 0 46px; position: relative; background: linear-gradient(160deg, #e2e4e6, #e7e4e1 55%, #e2e3e1); }
.pages { display: grid; grid-template-columns: repeat(7, 1fr); gap: 5px 6px; margin-top: -79px; background: #d8d7d6; box-shadow: 0 0 6px #cfcfcf; }
.page {
  height: 280px; min-width: 0; overflow: hidden; position: relative;
  padding: 0 22px 0 30px;
  font: 4px/7px "Liberation Serif", "Noto Sans CJK SC", serif;
  color: #555;
  --m: linear-gradient(#bbb, #bbb);
  background:
    var(--m) 23px 20px / 7px 1px no-repeat, var(--m) 29px 14px / 1px 7px no-repeat,
    var(--m) right 15px top 20px / 7px 1px no-repeat, var(--m) right 21px top 14px / 1px 7px no-repeat,
    var(--m) 23px 259px / 7px 1px no-repeat, var(--m) 29px 259px / 1px 7px no-repeat,
    var(--m) right 15px top 259px / 7px 1px no-repeat, var(--m) right 21px top 259px / 1px 7px no-repeat, #fff;
  box-shadow: 0 0 2px #aaa;
}
.page header { height: 19px; padding-top: 11px; margin-bottom: 1px; border-bottom: 1px solid #888; text-align: center; color: #999; }
.page p { margin: 0; text-indent: 8px; white-space: pre; }
.page p.c { text-indent: 0; }
.page h2, .page h3, .page h4 { margin: 0; font-weight: 700; color: #444; }
.page h2 { font-size: 5px; line-height: 7px; text-align: center; }
.page h3 { font-size: 5px; line-height: 13px; }
.page h4 { font-size: 4px; line-height: 12px; }
.cont { padding-top: 79px; }
.cont .up { margin-top: -3px; }
.no { position: absolute; left: 0; right: 0; bottom: 13px; text-align: center; font-size: 3px; color: #aaa; }
.page u { text-decoration: underline dotted #e00 1px; }
.page figure { margin: 0; }
.page figure svg { display: block; width: 145px; overflow: visible; }
.page figcaption { text-align: center; height: 7px; }
.page text { font-size: 3px; text-anchor: middle; stroke: none; fill: #444; }
.page g[fill="#fff"] text { fill: #fff; }
.page .soft text { fill: #999; }
.thin { stroke: #aaa; stroke-width: .7; }
.mid { stroke: #777; stroke-width: .8; }
.bold { stroke: #111; stroke-width: 1; }
.page .v text { writing-mode: vertical-rl; text-anchor: start; }
.page .g5p { margin-top: 5px; }
.page .g2p { margin-top: 2px; }
.page .g1p { margin-top: 1px; }
.page .dense { line-height: 5px; }
.page .big { line-height: 8px; margin-bottom: 1px; }
.db { width: 160px; margin-left: -1px; border-collapse: collapse; table-layout: fixed; font-size: 3px; line-height: 4px; text-align: center; }
.db caption { height: 6px; line-height: 6px; font-size: 4px; padding-right: 14px; }
.db .r { text-align: right; }
.db th, .db td { padding: 0; height: 4px; border: 1px solid #111; font-weight: 400; white-space: nowrap; }
.db td:first-child, .db th:first-child { border-left-color: #bbb; }
.db td:last-child, .db th:last-child { border-right-color: #bbb; }
.page .shot svg { width: 158px; margin-left: -1px; }
.grip { position: absolute; left: 44px; top: 26px; width: 22px; height: 24px; background: #fff; border-radius: 6px; display: flex; align-items: center; justify-content: center; }

.vscroll { width: 16px; display: flex; flex-direction: column; align-items: center; padding: 10px 0; gap: 9px; background: #e4e3e2; border-right: 1px solid #c8c8c8; }
.thumb { width: 10px; height: 274px; border-radius: 5px; background: #c6c6c7; margin: 128px 0 auto; }
.rail { width: 60px; display: flex; flex-direction: column; align-items: flex-start; padding: 27px 0 0 24px; background: linear-gradient(#e3e4e5, #e6e3e0 70%, #e2e2e2); }
.rail svg:nth-child(2) { margin: 35px 0 37px; }
.edge { width: 10px; background: #efefef; }

/* status bar */
.status { display: flex; align-items: center; height: 30px; flex: none; padding: 0 0 2px 20px; border-top: 1px solid #cfd0d0; background: linear-gradient(90deg, #e4e3e4, #e2e3e3 50%, #dfe3dc 80%, #e2e3e0); white-space: nowrap; }
.status > i, .views > i { width: 1px; height: 18px; background: #c2c2c2; margin: 0 15px; }
.status .plain { margin-left: 20px; }
.status .in { margin-left: 7px; }
.status .in2 { margin: 0 7px 0 23px; }
.status span { display: flex; align-items: center; gap: 9px; }
.status .far2 { margin-left: 18px; }
.status .warn { margin-left: 4px; gap: 7px; }
.views { margin-left: auto; display: flex; align-items: center; width: 650px; }
.views .bare { width: 41px; height: 28px; }
.views > .bare:first-child { width: 20px; }
.views > i { margin: 0 10px 0 15px; }
.views > .tight { margin-left: 5px; }
.views .on { width: 30px; background: #cfd0ce; border-radius: 5px; }
.views .fit { width: 30px; margin-right: 26px; }
.views .zoomd { width: 10px; margin: 0 21px 0 17px; }

/* taskbar */
.taskbar { display: flex; height: 50px; flex: none; background: #1e1e1e; color: #fff; }
.start { width: 60px; }
.search { width: 360px; background: #f2f2f2; border: 1px solid #c8c8c8; display: flex; align-items: center; padding: 0 12px 0 14px; gap: 13px; color: #222; }
.search input { flex: 1; min-width: 0; border: 0; background: none; outline: 0; font-size: 19px; padding: 0; }
.search input::placeholder { color: #333; }
.mg { stroke: #222; }
.apps { display: flex; margin-left: 3px; }
.apps button { width: 62px; display: flex; align-items: center; justify-content: center; }
.run { background: linear-gradient(#76b9ed, #76b9ed) center bottom / 51px 3px no-repeat; }
.cur { background: linear-gradient(#76b9ed, #76b9ed) bottom / 62px 3px no-repeat, #4a4a4a; }
.alert { background: linear-gradient(#ff7800, #ff7800) bottom / 62px 3px no-repeat, #a65f28; border-left: 1px solid #222; }
.tray { margin-left: auto; display: flex; align-items: center; gap: 10px; padding-right: 5px; }
.tray svg { stroke: #eee; stroke-width: 1.2; }
.fog { font-size: 18px; margin: 0 20px 0 2px; }
.zh { font-size: 20px; width: 20px; }
.sg { margin: 0 9px 0 6px; }
.tray time { width: 78px; text-align: center; font-size: 15px; line-height: 23px; margin-right: 23px; }
.note { position: relative; width: 36px; height: 50px; display: flex; align-items: center; border-right: 1px solid #555; padding-right: 9px; }
.note b { position: absolute; left: 9px; bottom: 5px; width: 20px; height: 20px; border-radius: 50%; background: #333; border: 1px solid #888; color: #fff; font-size: 14px; line-height: 18px; }

/* floating input-method bar */
.ime { position: absolute; right: 0; bottom: 50px; width: 251px; display: flex; }
.ime > svg { position: absolute; left: 0; bottom: 0; z-index: 1; }
.imebar { margin-left: 24px; flex: 1; height: 32px; background: #fff; border: 1px solid #b9cbe0; display: flex; align-items: center; justify-content: space-between; padding: 0 0 0 20px; }
.imebar b { color: #1769e0; font-size: 19px; }

/* floating network monitor */
.speed { position: absolute; right: 0; top: 76px; width: 41px; height: 233px; border-radius: 10px 0 0 10px; background: rgba(100, 103, 115, .5); box-shadow: 0 2px 8px rgba(0, 0, 0, .3); z-index: 3; display: flex; flex-direction: column; align-items: center; color: #fff; font-size: 12px; line-height: 14px; padding-top: 16px; }
.badge { width: 16px; height: 18px; border-radius: 3px 3px 8px 8px; background: #f98a3c; text-align: center; line-height: 17px; font-size: 14px; }
.ln { width: 36px; height: 1px; background: #9a9ca4; margin: 10px 0; }
.meter { width: 12px; height: 37px; border-radius: 3px 3px 6px 6px; background: linear-gradient(#f27a2a, #c9c02c 50%, #2fc4a0); }
.unit { display: flex; align-items: center; gap: 4px; color: #e2e2e6; }
.dn { margin-top: 4px; }
.crop { margin-top: 3px; }
```
